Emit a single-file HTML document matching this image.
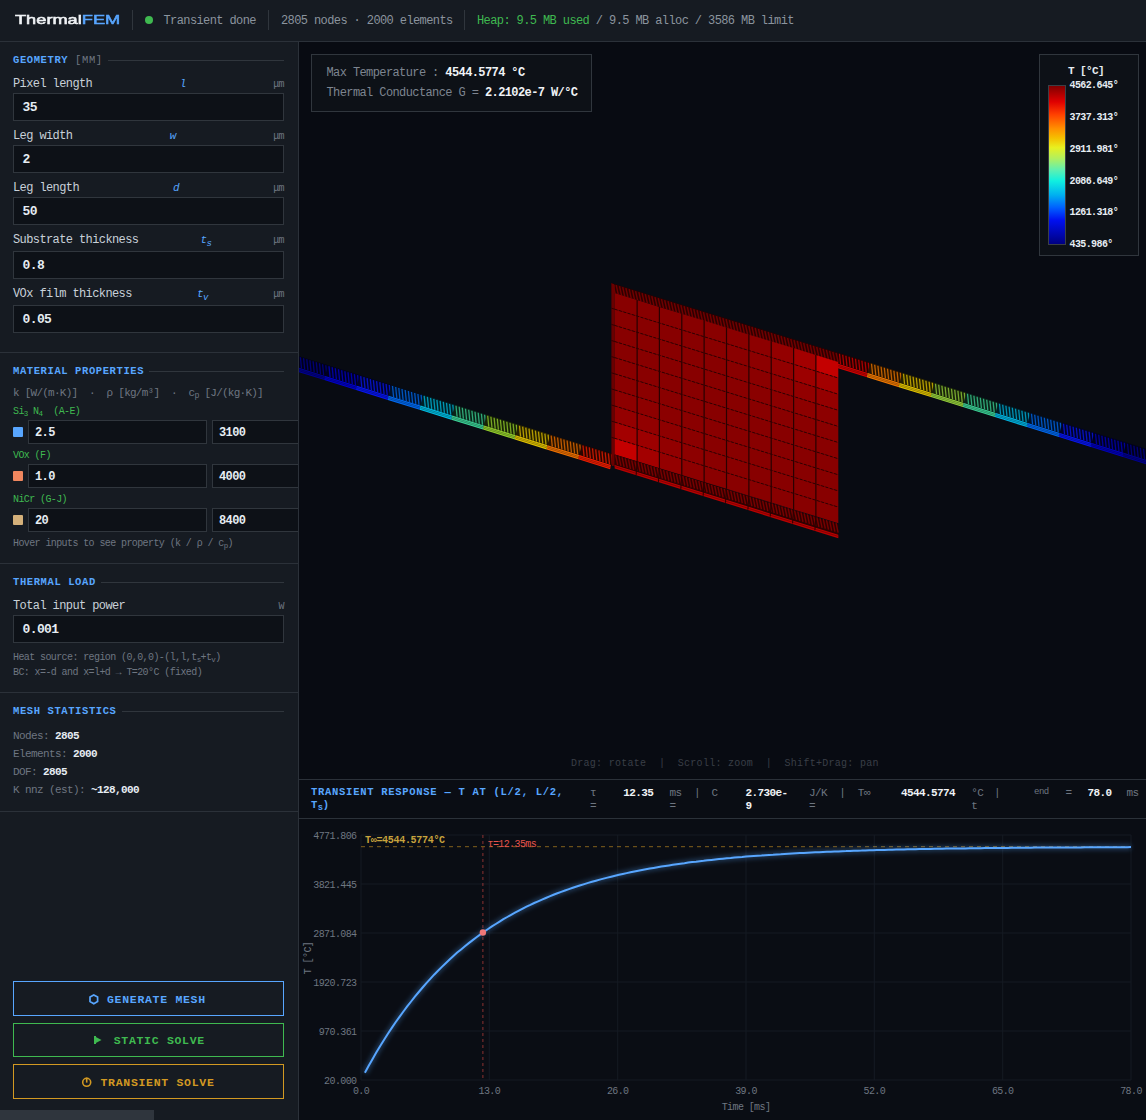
<!DOCTYPE html>
<html><head><meta charset="utf-8"><style>
*{box-sizing:border-box;margin:0;padding:0}
html,body{width:1146px;height:1120px;overflow:hidden;background:#0a0d14;font-family:"Liberation Mono",monospace;color:#c9d1d9}
.abs{position:absolute}
.t,.sh,.lbl,.iv,.it,.lg,.tt,.tk,.tv,.stat,.bt{position:absolute;white-space:pre}
#hdr{position:absolute;left:0;top:0;width:1146px;height:42px;background:#161b22;border-bottom:1px solid #2b3139}
.logo{position:absolute;left:15px;top:11px;font-family:"Liberation Sans",sans-serif;font-size:13.4px;line-height:18px;color:#f0f3f6;transform-origin:0 0;transform:scaleX(1.36);white-space:nowrap;-webkit-text-stroke:0.55px #f0f3f6}
.logo span{color:#58a6ff;-webkit-text-stroke:0.55px #58a6ff}
.sep{position:absolute;top:10px;width:1px;height:20px;background:#30363d}
#side{position:absolute;left:0;top:42px;width:299px;height:1078px;background:#161b22;border-right:1px solid #2b3139}
.sh{font-weight:bold;color:#58a6ff;display:flex;align-items:center;width:271px}
.sh i{font-style:normal;font-weight:normal;color:#6e7681}
.sh:after{content:"";flex:1;height:1px;background:#30363d;margin-left:5px;position:relative;top:0px}
.lbl{width:271px;display:flex;justify-content:space-between;align-items:baseline;color:#c9d1d9}
.lbl b{font-weight:normal;font-style:italic;color:#58a6ff;font-size:11px}
.lbl b sub{font-size:9px}
.lbl u{text-decoration:none;font-size:10px;color:#6e7681}
.inp{position:absolute;left:13px;width:271px;height:28px;background:#0d1117;border:1px solid #30363d}
.iv{font-weight:bold;color:#e6edf3}
.hsep{position:absolute;left:0;width:298px;height:1px;background:#2b3139}
sub{font-size:0.75em;vertical-align:-0.3em;line-height:0}
.sw{position:absolute;left:13px;width:10px;height:10px;border-radius:1px}
.mi{position:absolute;height:24px;background:#0d1117;border:1px solid #30363d}
.stat{color:#6e7681}
.stat b{color:#e6edf3}
.btn{position:absolute;left:13px;width:271px;height:35px;border:1px solid}
.bt{font-weight:bold}
#view{position:absolute;left:299px;top:42px;width:847px;height:737px;background:#080b12;overflow:hidden}
.it b{color:#f0f3f6}
.lg{font-weight:bold;color:#e6edf3}
.tt{font-weight:bold;color:#58a6ff}
.tt sub{letter-spacing:0}
.tk{color:#6e7681}
.tv{font-weight:bold;color:#f0f3f6}
.ax{font-family:"Liberation Mono",monospace;font-size:10px;letter-spacing:-0.6px;fill:#6e7681}
.lt{font-family:"Liberation Mono",monospace;font-size:10px;letter-spacing:-0.6px}
</style></head><body>
<div id="hdr"></div><div class="logo">Thermal<span>FEM</span></div><div class="sep" style="left:132px"></div><div class="abs" style="left:145px;top:16px;width:8px;height:8px;border-radius:50%;background:#3fb950"></div><div class="t" style="left:163.5px;top:14.00px;font-size:12px;line-height:15px;letter-spacing:-0.6px;color:#8b949e">Transient done</div>
<div class="sep" style="left:268px"></div><div class="t" style="left:281px;top:14.00px;font-size:12px;line-height:15px;letter-spacing:-0.6px;color:#8b949e">2805 nodes · 2000 elements</div>
<div class="sep" style="left:464px"></div><div class="t" style="left:477px;top:14.00px;font-size:12px;line-height:15px;letter-spacing:-0.6px;color:#8b949e"><span style="color:#3fb950">Heap: 9.5 MB used</span> / 9.5 MB alloc / 3586 MB limit</div>

<div id="side"></div>
<div style="position:absolute;left:0;top:0;width:298px;height:1120px;overflow:hidden">
<div class="sh" style="left:13px;top:54.00px;font-size:10.5px;line-height:13px;letter-spacing:0.6px;">GEOMETRY <i>[MM]</i></div>
<div class="lbl" style="left:13px;top:77.00px;font-size:12px;line-height:14px;letter-spacing:-0.6px;"><span>Pixel length</span><b>l</b><u>μm</u></div>
<div class="inp" style="top:93px"></div><div class="iv" style="left:22.5px;top:100.00px;font-size:13px;line-height:16px;letter-spacing:-0.6px;">35</div>
<div class="lbl" style="left:13px;top:129.00px;font-size:12px;line-height:14px;letter-spacing:-0.6px;"><span>Leg width</span><b>w</b><u>μm</u></div>
<div class="inp" style="top:145px"></div><div class="iv" style="left:22.5px;top:152.00px;font-size:13px;line-height:16px;letter-spacing:-0.6px;">2</div>
<div class="lbl" style="left:13px;top:181.00px;font-size:12px;line-height:14px;letter-spacing:-0.6px;"><span>Leg length</span><b>d</b><u>μm</u></div>
<div class="inp" style="top:197px"></div><div class="iv" style="left:22.5px;top:204.00px;font-size:13px;line-height:16px;letter-spacing:-0.6px;">50</div>
<div class="lbl" style="left:13px;top:233.00px;font-size:12px;line-height:14px;letter-spacing:-0.6px;"><span>Substrate thickness</span><b>t<sub>s</sub></b><u>μm</u></div>
<div class="inp" style="top:251px"></div><div class="iv" style="left:22.5px;top:258.00px;font-size:13px;line-height:16px;letter-spacing:-0.6px;">0.8</div>
<div class="lbl" style="left:13px;top:287.00px;font-size:12px;line-height:14px;letter-spacing:-0.6px;"><span>VOx film thickness</span><b>t<sub>v</sub></b><u>μm</u></div>
<div class="inp" style="top:305px"></div><div class="iv" style="left:22.5px;top:312.00px;font-size:13px;line-height:16px;letter-spacing:-0.6px;">0.05</div>
<div class="hsep" style="top:352px"></div><div class="sh" style="left:13px;top:365.00px;font-size:10.5px;line-height:13px;letter-spacing:0.6px;">MATERIAL PROPERTIES</div>
<div class="t" style="left:13px;top:386.00px;font-size:11px;line-height:14px;letter-spacing:-0.75px;color:#6e7681">k [W/(m·K)]  ·  ρ [kg/m³]  ·  c<sub>p</sub> [J/(kg·K)]</div>
<div class="t" style="left:13px;top:406.00px;font-size:10px;line-height:12px;letter-spacing:-0.6px;color:#3fb950">Si<sub>3</sub> N<sub>4</sub>  (A-E)</div>
<div class="sw" style="top:427px;background:#58a6ff"></div><div class="mi" style="top:420px;left:28px;width:179px"></div><div class="mi" style="top:420px;left:212px;width:179px"></div><div class="iv" style="left:35px;top:426.00px;font-size:12px;line-height:15px;letter-spacing:-0.6px;">2.5</div>
<div class="iv" style="left:219px;top:426.00px;font-size:12px;line-height:15px;letter-spacing:-0.6px;">3100</div>
<div class="t" style="left:13px;top:450.00px;font-size:10px;line-height:12px;letter-spacing:-0.6px;color:#3fb950">VOx (F)</div>
<div class="sw" style="top:471px;background:#f0875f"></div><div class="mi" style="top:464px;left:28px;width:179px"></div><div class="mi" style="top:464px;left:212px;width:179px"></div><div class="iv" style="left:35px;top:470.00px;font-size:12px;line-height:15px;letter-spacing:-0.6px;">1.0</div>
<div class="iv" style="left:219px;top:470.00px;font-size:12px;line-height:15px;letter-spacing:-0.6px;">4000</div>
<div class="t" style="left:13px;top:494.00px;font-size:10px;line-height:12px;letter-spacing:-0.6px;color:#3fb950">NiCr (G-J)</div>
<div class="sw" style="top:515px;background:#d4b07a"></div><div class="mi" style="top:508px;left:28px;width:179px"></div><div class="mi" style="top:508px;left:212px;width:179px"></div><div class="iv" style="left:35px;top:514.00px;font-size:12px;line-height:15px;letter-spacing:-0.6px;">20</div>
<div class="iv" style="left:219px;top:514.00px;font-size:12px;line-height:15px;letter-spacing:-0.6px;">8400</div>
<div class="t" style="left:13px;top:538.00px;font-size:10px;line-height:12px;letter-spacing:-0.6px;color:#6e7681">Hover inputs to see property (k / ρ / c<sub>p</sub>)</div>
<div class="hsep" style="top:563px"></div><div class="sh" style="left:13px;top:576.00px;font-size:10.5px;line-height:13px;letter-spacing:0.6px;">THERMAL LOAD</div>
<div class="lbl" style="left:13px;top:599.00px;font-size:12px;line-height:14px;letter-spacing:-0.6px;"><span>Total input power</span><u>W</u></div>
<div class="inp" style="top:615px"></div><div class="iv" style="left:22.5px;top:622.00px;font-size:13px;line-height:16px;letter-spacing:-0.6px;">0.001</div>
<div class="t" style="left:13px;top:652.00px;font-size:10px;line-height:12px;letter-spacing:-0.6px;color:#6e7681">Heat source: region (0,0,0)-(l,l,t<sub>s</sub>+t<sub>v</sub>)</div>
<div class="t" style="left:13px;top:667.00px;font-size:10px;line-height:12px;letter-spacing:-0.6px;color:#6e7681">BC: x=-d and x=l+d → T=20°C (fixed)</div>
<div class="hsep" style="top:692px"></div><div class="sh" style="left:13px;top:705.00px;font-size:10.5px;line-height:13px;letter-spacing:0.6px;">MESH STATISTICS</div>
<div class="stat" style="left:13px;top:729.00px;font-size:11px;line-height:14px;letter-spacing:-0.6px;">Nodes: <b>2805</b></div>
<div class="stat" style="left:13px;top:747.00px;font-size:11px;line-height:14px;letter-spacing:-0.6px;">Elements: <b>2000</b></div>
<div class="stat" style="left:13px;top:765.00px;font-size:11px;line-height:14px;letter-spacing:-0.6px;">DOF: <b>2805</b></div>
<div class="stat" style="left:13px;top:783.00px;font-size:11px;line-height:14px;letter-spacing:-0.6px;">K nnz (est): <b>~128,000</b></div>
<div class="hsep" style="top:811px"></div><div class="btn" style="top:981px;border-color:#58a6ff;height:35px"></div><div class="btn" style="top:1023px;border-color:#3fb950;height:34px"></div><div class="btn" style="top:1064px;border-color:#d29922;height:35px"></div><div class="bt" style="left:107px;top:993.00px;font-size:11.5px;line-height:14px;letter-spacing:0.7px;color:#58a6ff">GENERATE MESH</div>
<div class="bt" style="left:113.7px;top:1034.00px;font-size:11.5px;line-height:14px;letter-spacing:0.7px;color:#3fb950">STATIC SOLVE</div>
<div class="bt" style="left:100.5px;top:1076.00px;font-size:11.5px;line-height:14px;letter-spacing:0.7px;color:#d29922">TRANSIENT SOLVE</div>
<svg class="abs" style="left:0;top:0" width="298" height="1120"><polygon points="93.8,994.9 97.6,997.1 97.6,1001.5 93.8,1003.7 90,1001.5 90,997.1" fill="none" stroke="#58a6ff" stroke-width="1.7"/><polygon points="94,1036 101.5,1040 94,1044" fill="#3fb950"/><rect x="94" y="1036" width="2" height="8" fill="#3fb950"/><circle cx="86.7" cy="1082.3" r="4" fill="none" stroke="#d29922" stroke-width="1.6"/><rect x="85.9" y="1077.6" width="1.6" height="5" fill="#d29922"/></svg><div class="abs" style="left:0;top:1110px;width:154px;height:10px;background:#2f353d"></div>
</div>
<div id="view"><svg width="847" height="737" viewBox="299 42 847 737" style="position:absolute;left:0;top:0"><polygon points="296.0,355.3 327.8,365.2 325.1,375.9 293.4,366.0" fill="#000018"/>
<line x1="297.2" y1="356.3" x2="298.3" y2="367.3" stroke="#000072" stroke-width="1.3"/>
<line x1="300.4" y1="357.3" x2="301.5" y2="368.3" stroke="#000072" stroke-width="1.3"/>
<line x1="303.6" y1="358.3" x2="304.7" y2="369.3" stroke="#000072" stroke-width="1.3"/>
<line x1="306.8" y1="359.3" x2="307.9" y2="370.3" stroke="#000072" stroke-width="1.3"/>
<line x1="309.9" y1="360.3" x2="311.0" y2="371.3" stroke="#000072" stroke-width="1.3"/>
<line x1="313.1" y1="361.3" x2="314.2" y2="372.2" stroke="#000072" stroke-width="1.3"/>
<line x1="316.3" y1="362.3" x2="317.4" y2="373.2" stroke="#000072" stroke-width="1.3"/>
<line x1="319.5" y1="363.2" x2="320.6" y2="374.2" stroke="#000072" stroke-width="1.3"/>
<line x1="322.6" y1="364.2" x2="323.7" y2="375.2" stroke="#000072" stroke-width="1.3"/>
<line x1="325.8" y1="365.2" x2="326.9" y2="376.2" stroke="#000072" stroke-width="1.3"/>
<polygon points="293.4,366.0 325.1,375.9 324.3,380.1 292.6,370.2" fill="#000090"/>
<line x1="293.4" y1="367.5" x2="325.1" y2="377.4" stroke="#000044" stroke-width="0.6"/>
<line x1="293.4" y1="368.9" x2="325.1" y2="378.8" stroke="#000044" stroke-width="0.6"/>
<polygon points="327.8,365.2 359.5,375.1 356.9,385.8 325.1,375.9" fill="#000022"/>
<line x1="329.0" y1="366.2" x2="330.1" y2="377.2" stroke="#0000a2" stroke-width="1.3"/>
<line x1="332.2" y1="367.2" x2="333.3" y2="378.2" stroke="#0000a2" stroke-width="1.3"/>
<line x1="335.3" y1="368.2" x2="336.4" y2="379.2" stroke="#0000a2" stroke-width="1.3"/>
<line x1="338.5" y1="369.2" x2="339.6" y2="380.2" stroke="#0000a2" stroke-width="1.3"/>
<line x1="341.7" y1="370.2" x2="342.8" y2="381.2" stroke="#0000a2" stroke-width="1.3"/>
<line x1="344.9" y1="371.2" x2="346.0" y2="382.1" stroke="#0000a2" stroke-width="1.3"/>
<line x1="348.0" y1="372.2" x2="349.1" y2="383.1" stroke="#0000a2" stroke-width="1.3"/>
<line x1="351.2" y1="373.1" x2="352.3" y2="384.1" stroke="#0000a2" stroke-width="1.3"/>
<line x1="354.4" y1="374.1" x2="355.5" y2="385.1" stroke="#0000a2" stroke-width="1.3"/>
<line x1="357.6" y1="375.1" x2="358.7" y2="386.1" stroke="#0000a2" stroke-width="1.3"/>
<polygon points="325.1,375.9 356.9,385.8 356.1,390.0 324.3,380.1" fill="#0000cd"/>
<line x1="325.1" y1="377.4" x2="356.9" y2="387.3" stroke="#000061" stroke-width="0.6"/>
<line x1="325.1" y1="378.8" x2="356.9" y2="388.7" stroke="#000061" stroke-width="0.6"/>
<polygon points="359.5,375.1 391.2,385.0 388.6,395.7 356.9,385.8" fill="#010328"/>
<line x1="360.7" y1="376.1" x2="361.8" y2="387.1" stroke="#0612bf" stroke-width="1.3"/>
<line x1="363.9" y1="377.1" x2="365.0" y2="388.1" stroke="#0612bf" stroke-width="1.3"/>
<line x1="367.1" y1="378.1" x2="368.2" y2="389.1" stroke="#0612bf" stroke-width="1.3"/>
<line x1="370.3" y1="379.1" x2="371.4" y2="390.1" stroke="#0612bf" stroke-width="1.3"/>
<line x1="373.4" y1="380.1" x2="374.5" y2="391.1" stroke="#0612bf" stroke-width="1.3"/>
<line x1="376.6" y1="381.1" x2="377.7" y2="392.1" stroke="#0612bf" stroke-width="1.3"/>
<line x1="379.8" y1="382.1" x2="380.9" y2="393.0" stroke="#0612bf" stroke-width="1.3"/>
<line x1="383.0" y1="383.1" x2="384.1" y2="394.0" stroke="#0612bf" stroke-width="1.3"/>
<line x1="386.1" y1="384.0" x2="387.2" y2="395.0" stroke="#0612bf" stroke-width="1.3"/>
<line x1="389.3" y1="385.0" x2="390.4" y2="396.0" stroke="#0612bf" stroke-width="1.3"/>
<polygon points="356.9,385.8 388.6,395.7 387.8,399.9 356.1,390.0" fill="#0716f2"/>
<line x1="356.9" y1="387.3" x2="388.6" y2="397.2" stroke="#030a72" stroke-width="0.6"/>
<line x1="356.9" y1="388.7" x2="388.6" y2="398.6" stroke="#030a72" stroke-width="0.6"/>
<polygon points="391.2,385.0 423.0,394.9 420.4,405.6 388.6,395.7" fill="#001128"/>
<line x1="392.5" y1="386.0" x2="393.6" y2="397.0" stroke="#0054bf" stroke-width="1.3"/>
<line x1="395.7" y1="387.0" x2="396.8" y2="398.0" stroke="#0054bf" stroke-width="1.3"/>
<line x1="398.8" y1="388.0" x2="399.9" y2="399.0" stroke="#0054bf" stroke-width="1.3"/>
<line x1="402.0" y1="389.0" x2="403.1" y2="400.0" stroke="#0054bf" stroke-width="1.3"/>
<line x1="405.2" y1="390.0" x2="406.3" y2="401.0" stroke="#0054bf" stroke-width="1.3"/>
<line x1="408.4" y1="391.0" x2="409.5" y2="402.0" stroke="#0054bf" stroke-width="1.3"/>
<line x1="411.5" y1="392.0" x2="412.6" y2="403.0" stroke="#0054bf" stroke-width="1.3"/>
<line x1="414.7" y1="393.0" x2="415.8" y2="403.9" stroke="#0054bf" stroke-width="1.3"/>
<line x1="417.9" y1="394.0" x2="419.0" y2="404.9" stroke="#0054bf" stroke-width="1.3"/>
<line x1="421.1" y1="394.9" x2="422.2" y2="405.9" stroke="#0054bf" stroke-width="1.3"/>
<polygon points="388.6,395.7 420.4,405.6 419.6,409.8 387.8,399.9" fill="#006af2"/>
<line x1="388.6" y1="397.2" x2="420.4" y2="407.1" stroke="#003272" stroke-width="0.6"/>
<line x1="388.6" y1="398.6" x2="420.4" y2="408.5" stroke="#003272" stroke-width="0.6"/>
<polygon points="423.0,394.9 454.8,404.8 452.1,415.5 420.4,405.6" fill="#002026"/>
<line x1="424.2" y1="395.9" x2="425.3" y2="406.9" stroke="#0096b4" stroke-width="1.3"/>
<line x1="427.4" y1="396.9" x2="428.5" y2="407.9" stroke="#0096b4" stroke-width="1.3"/>
<line x1="430.6" y1="397.9" x2="431.7" y2="408.9" stroke="#0096b4" stroke-width="1.3"/>
<line x1="433.8" y1="398.9" x2="434.9" y2="409.9" stroke="#0096b4" stroke-width="1.3"/>
<line x1="436.9" y1="399.9" x2="438.0" y2="410.9" stroke="#0096b4" stroke-width="1.3"/>
<line x1="440.1" y1="400.9" x2="441.2" y2="411.9" stroke="#0096b4" stroke-width="1.3"/>
<line x1="443.3" y1="401.9" x2="444.4" y2="412.9" stroke="#0096b4" stroke-width="1.3"/>
<line x1="446.5" y1="402.9" x2="447.6" y2="413.8" stroke="#0096b4" stroke-width="1.3"/>
<line x1="449.6" y1="403.9" x2="450.7" y2="414.8" stroke="#0096b4" stroke-width="1.3"/>
<line x1="452.8" y1="404.8" x2="453.9" y2="415.8" stroke="#0096b4" stroke-width="1.3"/>
<polygon points="420.4,405.6 452.1,415.5 451.3,419.7 419.6,409.8" fill="#00bee4"/>
<line x1="420.4" y1="407.1" x2="452.1" y2="417.0" stroke="#005a6c" stroke-width="0.6"/>
<line x1="420.4" y1="408.5" x2="452.1" y2="418.4" stroke="#005a6c" stroke-width="0.6"/>
<polygon points="454.8,404.8 486.5,414.7 483.9,425.4 452.1,415.5" fill="#0a2319"/>
<line x1="456.0" y1="405.8" x2="457.1" y2="416.8" stroke="#30a878" stroke-width="1.3"/>
<line x1="459.2" y1="406.8" x2="460.3" y2="417.8" stroke="#30a878" stroke-width="1.3"/>
<line x1="462.3" y1="407.8" x2="463.4" y2="418.8" stroke="#30a878" stroke-width="1.3"/>
<line x1="465.5" y1="408.8" x2="466.6" y2="419.8" stroke="#30a878" stroke-width="1.3"/>
<line x1="468.7" y1="409.8" x2="469.8" y2="420.8" stroke="#30a878" stroke-width="1.3"/>
<line x1="471.9" y1="410.8" x2="473.0" y2="421.8" stroke="#30a878" stroke-width="1.3"/>
<line x1="475.0" y1="411.8" x2="476.1" y2="422.8" stroke="#30a878" stroke-width="1.3"/>
<line x1="478.2" y1="412.8" x2="479.3" y2="423.8" stroke="#30a878" stroke-width="1.3"/>
<line x1="481.4" y1="413.8" x2="482.5" y2="424.7" stroke="#30a878" stroke-width="1.3"/>
<line x1="484.6" y1="414.8" x2="485.7" y2="425.7" stroke="#30a878" stroke-width="1.3"/>
<polygon points="452.1,415.5 483.9,425.4 483.1,429.6 451.3,419.7" fill="#3cd498"/>
<line x1="452.1" y1="417.0" x2="483.9" y2="426.9" stroke="#1c6448" stroke-width="0.6"/>
<line x1="452.1" y1="418.4" x2="483.9" y2="428.3" stroke="#1c6448" stroke-width="0.6"/>
<polygon points="486.5,414.7 518.2,424.6 515.6,435.3 483.9,425.4" fill="#192307"/>
<line x1="487.7" y1="415.7" x2="488.8" y2="426.7" stroke="#78a824" stroke-width="1.3"/>
<line x1="490.9" y1="416.7" x2="492.0" y2="427.7" stroke="#78a824" stroke-width="1.3"/>
<line x1="494.1" y1="417.7" x2="495.2" y2="428.7" stroke="#78a824" stroke-width="1.3"/>
<line x1="497.3" y1="418.7" x2="498.4" y2="429.7" stroke="#78a824" stroke-width="1.3"/>
<line x1="500.4" y1="419.7" x2="501.5" y2="430.7" stroke="#78a824" stroke-width="1.3"/>
<line x1="503.6" y1="420.7" x2="504.7" y2="431.7" stroke="#78a824" stroke-width="1.3"/>
<line x1="506.8" y1="421.7" x2="507.9" y2="432.7" stroke="#78a824" stroke-width="1.3"/>
<line x1="510.0" y1="422.7" x2="511.1" y2="433.7" stroke="#78a824" stroke-width="1.3"/>
<line x1="513.1" y1="423.7" x2="514.2" y2="434.7" stroke="#78a824" stroke-width="1.3"/>
<line x1="516.3" y1="424.7" x2="517.4" y2="435.6" stroke="#78a824" stroke-width="1.3"/>
<polygon points="483.9,425.4 515.6,435.3 514.9,439.5 483.1,429.6" fill="#98d42d"/>
<line x1="483.9" y1="426.9" x2="515.6" y2="436.8" stroke="#486415" stroke-width="0.6"/>
<line x1="483.9" y1="428.3" x2="515.6" y2="438.2" stroke="#486415" stroke-width="0.6"/>
<polygon points="518.2,424.6 550.0,434.5 547.4,445.2 515.6,435.3" fill="#262100"/>
<line x1="519.5" y1="425.7" x2="520.6" y2="436.6" stroke="#b49c00" stroke-width="1.3"/>
<line x1="522.7" y1="426.6" x2="523.8" y2="437.6" stroke="#b49c00" stroke-width="1.3"/>
<line x1="525.8" y1="427.6" x2="526.9" y2="438.6" stroke="#b49c00" stroke-width="1.3"/>
<line x1="529.0" y1="428.6" x2="530.1" y2="439.6" stroke="#b49c00" stroke-width="1.3"/>
<line x1="532.2" y1="429.6" x2="533.3" y2="440.6" stroke="#b49c00" stroke-width="1.3"/>
<line x1="535.4" y1="430.6" x2="536.5" y2="441.6" stroke="#b49c00" stroke-width="1.3"/>
<line x1="538.5" y1="431.6" x2="539.6" y2="442.6" stroke="#b49c00" stroke-width="1.3"/>
<line x1="541.7" y1="432.6" x2="542.8" y2="443.6" stroke="#b49c00" stroke-width="1.3"/>
<line x1="544.9" y1="433.6" x2="546.0" y2="444.6" stroke="#b49c00" stroke-width="1.3"/>
<line x1="548.1" y1="434.6" x2="549.2" y2="445.5" stroke="#b49c00" stroke-width="1.3"/>
<polygon points="515.6,435.3 547.4,445.2 546.6,449.4 514.9,439.5" fill="#e4c500"/>
<line x1="515.6" y1="436.8" x2="547.4" y2="446.7" stroke="#6c5d00" stroke-width="0.6"/>
<line x1="515.6" y1="438.2" x2="547.4" y2="448.1" stroke="#6c5d00" stroke-width="0.6"/>
<polygon points="550.0,434.5 581.8,444.4 579.1,455.1 547.4,445.2" fill="#281300"/>
<line x1="551.2" y1="435.6" x2="552.3" y2="446.5" stroke="#bf5a00" stroke-width="1.3"/>
<line x1="554.4" y1="436.5" x2="555.5" y2="447.5" stroke="#bf5a00" stroke-width="1.3"/>
<line x1="557.6" y1="437.5" x2="558.7" y2="448.5" stroke="#bf5a00" stroke-width="1.3"/>
<line x1="560.8" y1="438.5" x2="561.9" y2="449.5" stroke="#bf5a00" stroke-width="1.3"/>
<line x1="563.9" y1="439.5" x2="565.0" y2="450.5" stroke="#bf5a00" stroke-width="1.3"/>
<line x1="567.1" y1="440.5" x2="568.2" y2="451.5" stroke="#bf5a00" stroke-width="1.3"/>
<line x1="570.3" y1="441.5" x2="571.4" y2="452.5" stroke="#bf5a00" stroke-width="1.3"/>
<line x1="573.5" y1="442.5" x2="574.6" y2="453.5" stroke="#bf5a00" stroke-width="1.3"/>
<line x1="576.6" y1="443.5" x2="577.7" y2="454.5" stroke="#bf5a00" stroke-width="1.3"/>
<line x1="579.8" y1="444.5" x2="580.9" y2="455.5" stroke="#bf5a00" stroke-width="1.3"/>
<polygon points="547.4,445.2 579.1,455.1 578.4,459.3 546.6,449.4" fill="#f27200"/>
<line x1="547.4" y1="446.7" x2="579.1" y2="456.6" stroke="#723600" stroke-width="0.6"/>
<line x1="547.4" y1="448.1" x2="579.1" y2="458.0" stroke="#723600" stroke-width="0.6"/>
<polygon points="581.8,444.4 613.5,454.3 610.9,465.0 579.1,455.1" fill="#280500"/>
<line x1="583.0" y1="445.5" x2="584.1" y2="456.4" stroke="#bf1800" stroke-width="1.3"/>
<line x1="586.2" y1="446.5" x2="587.3" y2="457.4" stroke="#bf1800" stroke-width="1.3"/>
<line x1="589.3" y1="447.4" x2="590.4" y2="458.4" stroke="#bf1800" stroke-width="1.3"/>
<line x1="592.5" y1="448.4" x2="593.6" y2="459.4" stroke="#bf1800" stroke-width="1.3"/>
<line x1="595.7" y1="449.4" x2="596.8" y2="460.4" stroke="#bf1800" stroke-width="1.3"/>
<line x1="598.9" y1="450.4" x2="600.0" y2="461.4" stroke="#bf1800" stroke-width="1.3"/>
<line x1="602.0" y1="451.4" x2="603.1" y2="462.4" stroke="#bf1800" stroke-width="1.3"/>
<line x1="605.2" y1="452.4" x2="606.3" y2="463.4" stroke="#bf1800" stroke-width="1.3"/>
<line x1="608.4" y1="453.4" x2="609.5" y2="464.4" stroke="#bf1800" stroke-width="1.3"/>
<line x1="611.6" y1="454.4" x2="612.7" y2="465.4" stroke="#bf1800" stroke-width="1.3"/>
<polygon points="579.1,455.1 610.9,465.0 610.1,469.2 578.4,459.3" fill="#f21e00"/>
<line x1="579.1" y1="456.6" x2="610.9" y2="466.5" stroke="#720e00" stroke-width="0.6"/>
<line x1="579.1" y1="458.0" x2="610.9" y2="468.0" stroke="#720e00" stroke-width="0.6"/>
<polygon points="838.3,352.8 870.3,362.8 867.7,373.0 835.7,363.0" fill="#230000"/>
<line x1="839.5" y1="353.8" x2="840.6" y2="364.3" stroke="#a80000" stroke-width="1.3"/>
<line x1="842.7" y1="354.8" x2="843.8" y2="365.3" stroke="#a80000" stroke-width="1.3"/>
<line x1="845.9" y1="355.8" x2="847.0" y2="366.3" stroke="#a80000" stroke-width="1.3"/>
<line x1="849.1" y1="356.8" x2="850.2" y2="367.3" stroke="#a80000" stroke-width="1.3"/>
<line x1="852.3" y1="357.8" x2="853.4" y2="368.3" stroke="#a80000" stroke-width="1.3"/>
<line x1="855.5" y1="358.8" x2="856.6" y2="369.3" stroke="#a80000" stroke-width="1.3"/>
<line x1="858.7" y1="359.8" x2="859.8" y2="370.3" stroke="#a80000" stroke-width="1.3"/>
<line x1="861.9" y1="360.8" x2="863.0" y2="371.3" stroke="#a80000" stroke-width="1.3"/>
<line x1="865.1" y1="361.8" x2="866.2" y2="372.3" stroke="#a80000" stroke-width="1.3"/>
<line x1="868.3" y1="362.8" x2="869.4" y2="373.3" stroke="#a80000" stroke-width="1.3"/>
<polygon points="835.7,363.0 867.7,373.0 866.9,377.2 834.9,367.2" fill="#d40000"/>
<line x1="835.7" y1="364.5" x2="867.7" y2="374.5" stroke="#640000" stroke-width="0.6"/>
<line x1="835.7" y1="365.9" x2="867.7" y2="375.9" stroke="#640000" stroke-width="0.6"/>
<polygon points="870.3,362.8 902.3,372.8 899.7,383.0 867.7,373.0" fill="#281400"/>
<line x1="871.5" y1="363.8" x2="872.6" y2="374.3" stroke="#bf6000" stroke-width="1.3"/>
<line x1="874.7" y1="364.8" x2="875.8" y2="375.3" stroke="#bf6000" stroke-width="1.3"/>
<line x1="877.9" y1="365.8" x2="879.0" y2="376.3" stroke="#bf6000" stroke-width="1.3"/>
<line x1="881.1" y1="366.8" x2="882.2" y2="377.3" stroke="#bf6000" stroke-width="1.3"/>
<line x1="884.3" y1="367.8" x2="885.4" y2="378.3" stroke="#bf6000" stroke-width="1.3"/>
<line x1="887.5" y1="368.8" x2="888.6" y2="379.3" stroke="#bf6000" stroke-width="1.3"/>
<line x1="890.7" y1="369.8" x2="891.8" y2="380.3" stroke="#bf6000" stroke-width="1.3"/>
<line x1="893.9" y1="370.8" x2="895.0" y2="381.3" stroke="#bf6000" stroke-width="1.3"/>
<line x1="897.1" y1="371.8" x2="898.2" y2="382.3" stroke="#bf6000" stroke-width="1.3"/>
<line x1="900.3" y1="372.8" x2="901.4" y2="383.3" stroke="#bf6000" stroke-width="1.3"/>
<polygon points="867.7,373.0 899.7,383.0 898.9,387.2 866.9,377.2" fill="#f27900"/>
<line x1="867.7" y1="374.5" x2="899.7" y2="384.5" stroke="#723900" stroke-width="0.6"/>
<line x1="867.7" y1="375.9" x2="899.7" y2="385.9" stroke="#723900" stroke-width="0.6"/>
<polygon points="902.3,372.8 934.3,382.7 931.7,392.9 899.7,383.0" fill="#262100"/>
<line x1="903.5" y1="373.8" x2="904.6" y2="384.3" stroke="#b49c00" stroke-width="1.3"/>
<line x1="906.7" y1="374.8" x2="907.8" y2="385.3" stroke="#b49c00" stroke-width="1.3"/>
<line x1="909.9" y1="375.8" x2="911.0" y2="386.3" stroke="#b49c00" stroke-width="1.3"/>
<line x1="913.1" y1="376.8" x2="914.2" y2="387.3" stroke="#b49c00" stroke-width="1.3"/>
<line x1="916.3" y1="377.8" x2="917.4" y2="388.3" stroke="#b49c00" stroke-width="1.3"/>
<line x1="919.5" y1="378.8" x2="920.6" y2="389.3" stroke="#b49c00" stroke-width="1.3"/>
<line x1="922.7" y1="379.8" x2="923.8" y2="390.3" stroke="#b49c00" stroke-width="1.3"/>
<line x1="925.9" y1="380.8" x2="927.0" y2="391.3" stroke="#b49c00" stroke-width="1.3"/>
<line x1="929.1" y1="381.8" x2="930.2" y2="392.3" stroke="#b49c00" stroke-width="1.3"/>
<line x1="932.3" y1="382.8" x2="933.4" y2="393.3" stroke="#b49c00" stroke-width="1.3"/>
<polygon points="899.7,383.0 931.7,392.9 930.9,397.1 898.9,387.2" fill="#e4c500"/>
<line x1="899.7" y1="384.5" x2="931.7" y2="394.4" stroke="#6c5d00" stroke-width="0.6"/>
<line x1="899.7" y1="385.9" x2="931.7" y2="395.9" stroke="#6c5d00" stroke-width="0.6"/>
<polygon points="934.3,382.7 966.3,392.7 963.7,402.9 931.7,392.9" fill="#19230a"/>
<line x1="935.5" y1="383.8" x2="936.6" y2="394.3" stroke="#78a830" stroke-width="1.3"/>
<line x1="938.7" y1="384.8" x2="939.8" y2="395.3" stroke="#78a830" stroke-width="1.3"/>
<line x1="941.9" y1="385.8" x2="943.0" y2="396.3" stroke="#78a830" stroke-width="1.3"/>
<line x1="945.1" y1="386.8" x2="946.2" y2="397.3" stroke="#78a830" stroke-width="1.3"/>
<line x1="948.3" y1="387.8" x2="949.4" y2="398.3" stroke="#78a830" stroke-width="1.3"/>
<line x1="951.5" y1="388.8" x2="952.6" y2="399.3" stroke="#78a830" stroke-width="1.3"/>
<line x1="954.7" y1="389.8" x2="955.8" y2="400.3" stroke="#78a830" stroke-width="1.3"/>
<line x1="957.9" y1="390.8" x2="959.0" y2="401.3" stroke="#78a830" stroke-width="1.3"/>
<line x1="961.1" y1="391.8" x2="962.2" y2="402.3" stroke="#78a830" stroke-width="1.3"/>
<line x1="964.3" y1="392.8" x2="965.4" y2="403.3" stroke="#78a830" stroke-width="1.3"/>
<polygon points="931.7,392.9 963.7,402.9 962.9,407.1 930.9,397.1" fill="#98d43c"/>
<line x1="931.7" y1="394.4" x2="963.7" y2="404.4" stroke="#48641c" stroke-width="0.6"/>
<line x1="931.7" y1="395.9" x2="963.7" y2="405.9" stroke="#48641c" stroke-width="0.6"/>
<polygon points="966.3,392.7 998.3,402.7 995.7,412.9 963.7,402.9" fill="#0a2319"/>
<line x1="967.5" y1="393.8" x2="968.6" y2="404.3" stroke="#30a878" stroke-width="1.3"/>
<line x1="970.7" y1="394.8" x2="971.8" y2="405.3" stroke="#30a878" stroke-width="1.3"/>
<line x1="973.9" y1="395.8" x2="975.0" y2="406.3" stroke="#30a878" stroke-width="1.3"/>
<line x1="977.1" y1="396.8" x2="978.2" y2="407.3" stroke="#30a878" stroke-width="1.3"/>
<line x1="980.3" y1="397.8" x2="981.4" y2="408.3" stroke="#30a878" stroke-width="1.3"/>
<line x1="983.5" y1="398.8" x2="984.6" y2="409.3" stroke="#30a878" stroke-width="1.3"/>
<line x1="986.7" y1="399.8" x2="987.8" y2="410.3" stroke="#30a878" stroke-width="1.3"/>
<line x1="989.9" y1="400.8" x2="991.0" y2="411.2" stroke="#30a878" stroke-width="1.3"/>
<line x1="993.1" y1="401.8" x2="994.2" y2="412.2" stroke="#30a878" stroke-width="1.3"/>
<line x1="996.3" y1="402.8" x2="997.4" y2="413.2" stroke="#30a878" stroke-width="1.3"/>
<polygon points="963.7,402.9 995.7,412.9 994.9,417.1 962.9,407.1" fill="#3cd498"/>
<line x1="963.7" y1="404.4" x2="995.7" y2="414.4" stroke="#1c6448" stroke-width="0.6"/>
<line x1="963.7" y1="405.9" x2="995.7" y2="415.8" stroke="#1c6448" stroke-width="0.6"/>
<polygon points="998.3,402.7 1030.3,412.7 1027.7,422.9 995.7,412.9" fill="#001e26"/>
<line x1="999.5" y1="403.8" x2="1000.6" y2="414.2" stroke="#0090b4" stroke-width="1.3"/>
<line x1="1002.7" y1="404.8" x2="1003.8" y2="415.2" stroke="#0090b4" stroke-width="1.3"/>
<line x1="1005.9" y1="405.8" x2="1007.0" y2="416.2" stroke="#0090b4" stroke-width="1.3"/>
<line x1="1009.1" y1="406.8" x2="1010.2" y2="417.2" stroke="#0090b4" stroke-width="1.3"/>
<line x1="1012.3" y1="407.8" x2="1013.4" y2="418.2" stroke="#0090b4" stroke-width="1.3"/>
<line x1="1015.5" y1="408.8" x2="1016.6" y2="419.2" stroke="#0090b4" stroke-width="1.3"/>
<line x1="1018.7" y1="409.8" x2="1019.8" y2="420.2" stroke="#0090b4" stroke-width="1.3"/>
<line x1="1021.9" y1="410.8" x2="1023.0" y2="421.2" stroke="#0090b4" stroke-width="1.3"/>
<line x1="1025.1" y1="411.8" x2="1026.2" y2="422.2" stroke="#0090b4" stroke-width="1.3"/>
<line x1="1028.3" y1="412.7" x2="1029.4" y2="423.2" stroke="#0090b4" stroke-width="1.3"/>
<polygon points="995.7,412.9 1027.7,422.9 1026.9,427.1 994.9,417.1" fill="#00b6e4"/>
<line x1="995.7" y1="414.4" x2="1027.7" y2="424.4" stroke="#00566c" stroke-width="0.6"/>
<line x1="995.7" y1="415.8" x2="1027.7" y2="425.8" stroke="#00566c" stroke-width="0.6"/>
<polygon points="1030.3,412.7 1062.3,422.7 1059.7,432.9 1027.7,422.9" fill="#001128"/>
<line x1="1031.5" y1="413.7" x2="1032.6" y2="424.2" stroke="#0054bf" stroke-width="1.3"/>
<line x1="1034.7" y1="414.7" x2="1035.8" y2="425.2" stroke="#0054bf" stroke-width="1.3"/>
<line x1="1037.9" y1="415.7" x2="1039.0" y2="426.2" stroke="#0054bf" stroke-width="1.3"/>
<line x1="1041.1" y1="416.7" x2="1042.2" y2="427.2" stroke="#0054bf" stroke-width="1.3"/>
<line x1="1044.3" y1="417.7" x2="1045.4" y2="428.2" stroke="#0054bf" stroke-width="1.3"/>
<line x1="1047.5" y1="418.7" x2="1048.6" y2="429.2" stroke="#0054bf" stroke-width="1.3"/>
<line x1="1050.7" y1="419.7" x2="1051.8" y2="430.2" stroke="#0054bf" stroke-width="1.3"/>
<line x1="1053.9" y1="420.7" x2="1055.0" y2="431.2" stroke="#0054bf" stroke-width="1.3"/>
<line x1="1057.1" y1="421.7" x2="1058.2" y2="432.2" stroke="#0054bf" stroke-width="1.3"/>
<line x1="1060.3" y1="422.7" x2="1061.4" y2="433.2" stroke="#0054bf" stroke-width="1.3"/>
<polygon points="1027.7,422.9 1059.7,432.9 1058.9,437.1 1026.9,427.1" fill="#006af2"/>
<line x1="1027.7" y1="424.4" x2="1059.7" y2="434.4" stroke="#003272" stroke-width="0.6"/>
<line x1="1027.7" y1="425.8" x2="1059.7" y2="435.8" stroke="#003272" stroke-width="0.6"/>
<polygon points="1062.3,422.7 1094.3,432.7 1091.7,442.9 1059.7,432.9" fill="#010328"/>
<line x1="1063.5" y1="423.7" x2="1064.6" y2="434.2" stroke="#0612bf" stroke-width="1.3"/>
<line x1="1066.7" y1="424.7" x2="1067.8" y2="435.2" stroke="#0612bf" stroke-width="1.3"/>
<line x1="1069.9" y1="425.7" x2="1071.0" y2="436.2" stroke="#0612bf" stroke-width="1.3"/>
<line x1="1073.1" y1="426.7" x2="1074.2" y2="437.2" stroke="#0612bf" stroke-width="1.3"/>
<line x1="1076.3" y1="427.7" x2="1077.4" y2="438.2" stroke="#0612bf" stroke-width="1.3"/>
<line x1="1079.5" y1="428.7" x2="1080.6" y2="439.2" stroke="#0612bf" stroke-width="1.3"/>
<line x1="1082.7" y1="429.7" x2="1083.8" y2="440.2" stroke="#0612bf" stroke-width="1.3"/>
<line x1="1085.9" y1="430.7" x2="1087.0" y2="441.2" stroke="#0612bf" stroke-width="1.3"/>
<line x1="1089.1" y1="431.7" x2="1090.2" y2="442.2" stroke="#0612bf" stroke-width="1.3"/>
<line x1="1092.3" y1="432.7" x2="1093.4" y2="443.2" stroke="#0612bf" stroke-width="1.3"/>
<polygon points="1059.7,432.9 1091.7,442.9 1090.9,447.1 1058.9,437.1" fill="#0716f2"/>
<line x1="1059.7" y1="434.4" x2="1091.7" y2="444.4" stroke="#030a72" stroke-width="0.6"/>
<line x1="1059.7" y1="435.8" x2="1091.7" y2="445.8" stroke="#030a72" stroke-width="0.6"/>
<polygon points="1094.3,432.7 1126.3,442.6 1123.7,452.8 1091.7,442.9" fill="#000020"/>
<line x1="1095.5" y1="433.7" x2="1096.6" y2="444.2" stroke="#000096" stroke-width="1.3"/>
<line x1="1098.7" y1="434.7" x2="1099.8" y2="445.2" stroke="#000096" stroke-width="1.3"/>
<line x1="1101.9" y1="435.7" x2="1103.0" y2="446.2" stroke="#000096" stroke-width="1.3"/>
<line x1="1105.1" y1="436.7" x2="1106.2" y2="447.2" stroke="#000096" stroke-width="1.3"/>
<line x1="1108.3" y1="437.7" x2="1109.4" y2="448.2" stroke="#000096" stroke-width="1.3"/>
<line x1="1111.5" y1="438.7" x2="1112.6" y2="449.2" stroke="#000096" stroke-width="1.3"/>
<line x1="1114.7" y1="439.7" x2="1115.8" y2="450.2" stroke="#000096" stroke-width="1.3"/>
<line x1="1117.9" y1="440.7" x2="1119.0" y2="451.2" stroke="#000096" stroke-width="1.3"/>
<line x1="1121.1" y1="441.7" x2="1122.2" y2="452.2" stroke="#000096" stroke-width="1.3"/>
<line x1="1124.3" y1="442.7" x2="1125.4" y2="453.2" stroke="#000096" stroke-width="1.3"/>
<polygon points="1091.7,442.9 1123.7,452.8 1122.9,457.0 1090.9,447.1" fill="#0000be"/>
<line x1="1091.7" y1="444.4" x2="1123.7" y2="454.4" stroke="#00005a" stroke-width="0.6"/>
<line x1="1091.7" y1="445.8" x2="1123.7" y2="455.8" stroke="#00005a" stroke-width="0.6"/>
<polygon points="1126.3,442.6 1158.3,452.6 1155.7,462.8 1123.7,452.8" fill="#000018"/>
<line x1="1127.5" y1="443.7" x2="1128.6" y2="454.2" stroke="#000072" stroke-width="1.3"/>
<line x1="1130.7" y1="444.7" x2="1131.8" y2="455.2" stroke="#000072" stroke-width="1.3"/>
<line x1="1133.9" y1="445.7" x2="1135.0" y2="456.2" stroke="#000072" stroke-width="1.3"/>
<line x1="1137.1" y1="446.7" x2="1138.2" y2="457.2" stroke="#000072" stroke-width="1.3"/>
<line x1="1140.3" y1="447.7" x2="1141.4" y2="458.2" stroke="#000072" stroke-width="1.3"/>
<line x1="1143.5" y1="448.7" x2="1144.6" y2="459.2" stroke="#000072" stroke-width="1.3"/>
<line x1="1146.7" y1="449.7" x2="1147.8" y2="460.2" stroke="#000072" stroke-width="1.3"/>
<line x1="1149.9" y1="450.7" x2="1151.0" y2="461.2" stroke="#000072" stroke-width="1.3"/>
<line x1="1153.1" y1="451.7" x2="1154.2" y2="462.2" stroke="#000072" stroke-width="1.3"/>
<line x1="1156.3" y1="452.7" x2="1157.4" y2="463.2" stroke="#000072" stroke-width="1.3"/>
<polygon points="1123.7,452.8 1155.7,462.8 1154.9,467.0 1122.9,457.0" fill="#000090"/>
<line x1="1123.7" y1="454.4" x2="1155.7" y2="464.3" stroke="#000044" stroke-width="0.6"/>
<line x1="1123.7" y1="455.8" x2="1155.7" y2="465.8" stroke="#000044" stroke-width="0.6"/>
<polygon points="611.4,283.1 838.3,352.9 838.3,361.9 614.7,293.1 611.4,293.1" fill="#2c0000"/>
<line x1="613.0" y1="284.2" x2="615.0" y2="293.2" stroke="#720000" stroke-width="1.4"/>
<line x1="616.2" y1="285.2" x2="618.2" y2="294.2" stroke="#720000" stroke-width="1.4"/>
<line x1="619.5" y1="286.2" x2="621.5" y2="295.2" stroke="#720000" stroke-width="1.4"/>
<line x1="622.7" y1="287.2" x2="624.7" y2="296.2" stroke="#720000" stroke-width="1.4"/>
<line x1="625.9" y1="288.2" x2="627.9" y2="297.2" stroke="#720000" stroke-width="1.4"/>
<line x1="629.2" y1="289.2" x2="631.2" y2="298.2" stroke="#720000" stroke-width="1.4"/>
<line x1="632.4" y1="290.2" x2="634.4" y2="299.2" stroke="#720000" stroke-width="1.4"/>
<line x1="635.6" y1="291.2" x2="637.6" y2="300.2" stroke="#720000" stroke-width="1.4"/>
<line x1="638.9" y1="292.2" x2="640.9" y2="301.2" stroke="#720000" stroke-width="1.4"/>
<line x1="642.1" y1="293.2" x2="644.1" y2="302.2" stroke="#720000" stroke-width="1.4"/>
<line x1="645.3" y1="294.2" x2="647.3" y2="303.2" stroke="#720000" stroke-width="1.4"/>
<line x1="648.6" y1="295.2" x2="650.6" y2="304.2" stroke="#720000" stroke-width="1.4"/>
<line x1="651.8" y1="296.2" x2="653.8" y2="305.2" stroke="#720000" stroke-width="1.4"/>
<line x1="655.0" y1="297.2" x2="657.0" y2="306.2" stroke="#720000" stroke-width="1.4"/>
<line x1="658.3" y1="298.2" x2="660.3" y2="307.2" stroke="#720000" stroke-width="1.4"/>
<line x1="661.5" y1="299.2" x2="663.5" y2="308.2" stroke="#720000" stroke-width="1.4"/>
<line x1="664.7" y1="300.2" x2="666.7" y2="309.2" stroke="#720000" stroke-width="1.4"/>
<line x1="668.0" y1="301.2" x2="670.0" y2="310.2" stroke="#720000" stroke-width="1.4"/>
<line x1="671.2" y1="302.2" x2="673.2" y2="311.2" stroke="#720000" stroke-width="1.4"/>
<line x1="674.4" y1="303.1" x2="676.4" y2="312.1" stroke="#720000" stroke-width="1.4"/>
<line x1="677.7" y1="304.1" x2="679.7" y2="313.1" stroke="#720000" stroke-width="1.4"/>
<line x1="680.9" y1="305.1" x2="682.9" y2="314.1" stroke="#720000" stroke-width="1.4"/>
<line x1="684.1" y1="306.1" x2="686.1" y2="315.1" stroke="#720000" stroke-width="1.4"/>
<line x1="687.4" y1="307.1" x2="689.4" y2="316.1" stroke="#720000" stroke-width="1.4"/>
<line x1="690.6" y1="308.1" x2="692.6" y2="317.1" stroke="#720000" stroke-width="1.4"/>
<line x1="693.8" y1="309.1" x2="695.8" y2="318.1" stroke="#720000" stroke-width="1.4"/>
<line x1="697.1" y1="310.1" x2="699.1" y2="319.1" stroke="#720000" stroke-width="1.4"/>
<line x1="700.3" y1="311.1" x2="702.3" y2="320.1" stroke="#720000" stroke-width="1.4"/>
<line x1="703.5" y1="312.1" x2="705.5" y2="321.1" stroke="#720000" stroke-width="1.4"/>
<line x1="706.8" y1="313.1" x2="708.8" y2="322.1" stroke="#720000" stroke-width="1.4"/>
<line x1="710.0" y1="314.1" x2="712.0" y2="323.1" stroke="#720000" stroke-width="1.4"/>
<line x1="713.2" y1="315.1" x2="715.2" y2="324.1" stroke="#720000" stroke-width="1.4"/>
<line x1="716.5" y1="316.1" x2="718.5" y2="325.1" stroke="#720000" stroke-width="1.4"/>
<line x1="719.7" y1="317.1" x2="721.7" y2="326.1" stroke="#720000" stroke-width="1.4"/>
<line x1="722.9" y1="318.1" x2="724.9" y2="327.1" stroke="#720000" stroke-width="1.4"/>
<line x1="726.1" y1="319.1" x2="728.1" y2="328.1" stroke="#720000" stroke-width="1.4"/>
<line x1="729.4" y1="320.1" x2="731.4" y2="329.1" stroke="#720000" stroke-width="1.4"/>
<line x1="732.6" y1="321.1" x2="734.6" y2="330.1" stroke="#720000" stroke-width="1.4"/>
<line x1="735.8" y1="322.0" x2="737.8" y2="331.0" stroke="#720000" stroke-width="1.4"/>
<line x1="739.1" y1="323.0" x2="741.1" y2="332.0" stroke="#720000" stroke-width="1.4"/>
<line x1="742.3" y1="324.0" x2="744.3" y2="333.0" stroke="#720000" stroke-width="1.4"/>
<line x1="745.5" y1="325.0" x2="747.5" y2="334.0" stroke="#720000" stroke-width="1.4"/>
<line x1="748.8" y1="326.0" x2="750.8" y2="335.0" stroke="#720000" stroke-width="1.4"/>
<line x1="752.0" y1="327.0" x2="754.0" y2="336.0" stroke="#720000" stroke-width="1.4"/>
<line x1="755.2" y1="328.0" x2="757.2" y2="337.0" stroke="#720000" stroke-width="1.4"/>
<line x1="758.5" y1="329.0" x2="760.5" y2="338.0" stroke="#720000" stroke-width="1.4"/>
<line x1="761.7" y1="330.0" x2="763.7" y2="339.0" stroke="#720000" stroke-width="1.4"/>
<line x1="764.9" y1="331.0" x2="766.9" y2="340.0" stroke="#720000" stroke-width="1.4"/>
<line x1="768.2" y1="332.0" x2="770.2" y2="341.0" stroke="#720000" stroke-width="1.4"/>
<line x1="771.4" y1="333.0" x2="773.4" y2="342.0" stroke="#720000" stroke-width="1.4"/>
<line x1="774.6" y1="334.0" x2="776.6" y2="343.0" stroke="#720000" stroke-width="1.4"/>
<line x1="777.9" y1="335.0" x2="779.9" y2="344.0" stroke="#720000" stroke-width="1.4"/>
<line x1="781.1" y1="336.0" x2="783.1" y2="345.0" stroke="#720000" stroke-width="1.4"/>
<line x1="784.3" y1="337.0" x2="786.3" y2="346.0" stroke="#720000" stroke-width="1.4"/>
<line x1="787.6" y1="338.0" x2="789.6" y2="347.0" stroke="#720000" stroke-width="1.4"/>
<line x1="790.8" y1="339.0" x2="792.8" y2="348.0" stroke="#720000" stroke-width="1.4"/>
<line x1="794.0" y1="340.0" x2="796.0" y2="349.0" stroke="#720000" stroke-width="1.4"/>
<line x1="797.3" y1="340.9" x2="799.3" y2="349.9" stroke="#720000" stroke-width="1.4"/>
<line x1="800.5" y1="341.9" x2="802.5" y2="350.9" stroke="#720000" stroke-width="1.4"/>
<line x1="803.7" y1="342.9" x2="805.7" y2="351.9" stroke="#720000" stroke-width="1.4"/>
<line x1="807.0" y1="343.9" x2="809.0" y2="352.9" stroke="#720000" stroke-width="1.4"/>
<line x1="810.2" y1="344.9" x2="812.2" y2="353.9" stroke="#720000" stroke-width="1.4"/>
<line x1="813.4" y1="345.9" x2="815.4" y2="354.9" stroke="#720000" stroke-width="1.4"/>
<line x1="816.7" y1="346.9" x2="818.7" y2="355.9" stroke="#720000" stroke-width="1.4"/>
<line x1="819.9" y1="347.9" x2="821.9" y2="356.9" stroke="#720000" stroke-width="1.4"/>
<line x1="823.1" y1="348.9" x2="825.1" y2="357.9" stroke="#720000" stroke-width="1.4"/>
<line x1="826.4" y1="349.9" x2="828.4" y2="358.9" stroke="#720000" stroke-width="1.4"/>
<line x1="829.6" y1="350.9" x2="831.6" y2="359.9" stroke="#720000" stroke-width="1.4"/>
<line x1="832.8" y1="351.9" x2="834.8" y2="360.9" stroke="#720000" stroke-width="1.4"/>
<line x1="836.1" y1="352.9" x2="838.1" y2="361.9" stroke="#720000" stroke-width="1.4"/>
<polygon points="611.4,283.1 614.7,285.1 614.7,466.4 611.4,464.4" fill="#6a0000"/>
<polygon points="614.7,293.1 637.1,300.0 637.1,316.1 614.7,309.2" fill="#880000"/>
<polygon points="614.7,309.2 637.1,316.1 637.1,332.2 614.7,325.4" fill="#880000"/>
<polygon points="614.7,325.4 637.1,332.2 637.1,348.4 614.7,341.5" fill="#880000"/>
<polygon points="614.7,341.5 637.1,348.4 637.1,364.5 614.7,357.6" fill="#880000"/>
<polygon points="614.7,357.6 637.1,364.5 637.1,380.6 614.7,373.8" fill="#890000"/>
<polygon points="614.7,373.8 637.1,380.6 637.1,396.8 614.7,389.9" fill="#8a0000"/>
<polygon points="614.7,389.9 637.1,396.8 637.1,412.9 614.7,406.0" fill="#8d0000"/>
<polygon points="614.7,406.0 637.1,412.9 637.1,429.0 614.7,422.1" fill="#940000"/>
<polygon points="614.7,422.1 637.1,429.0 637.1,445.1 614.7,438.3" fill="#a30000"/>
<polygon points="614.7,438.3 637.1,445.1 637.1,461.3 614.7,454.4" fill="#c40000"/>
<polygon points="637.1,300.0 659.4,306.9 659.4,323.0 637.1,316.1" fill="#880000"/>
<polygon points="637.1,316.1 659.4,323.0 659.4,339.1 637.1,332.2" fill="#880000"/>
<polygon points="637.1,332.2 659.4,339.1 659.4,355.2 637.1,348.4" fill="#880000"/>
<polygon points="637.1,348.4 659.4,355.2 659.4,371.4 637.1,364.5" fill="#880000"/>
<polygon points="637.1,364.5 659.4,371.4 659.4,387.5 637.1,380.6" fill="#890000"/>
<polygon points="637.1,380.6 659.4,387.5 659.4,403.6 637.1,396.8" fill="#8a0000"/>
<polygon points="637.1,396.8 659.4,403.6 659.4,419.8 637.1,412.9" fill="#8d0000"/>
<polygon points="637.1,412.9 659.4,419.8 659.4,435.9 637.1,429.0" fill="#920000"/>
<polygon points="637.1,429.0 659.4,435.9 659.4,452.0 637.1,445.1" fill="#9c0000"/>
<polygon points="637.1,445.1 659.4,452.0 659.4,468.2 637.1,461.3" fill="#a30000"/>
<polygon points="659.4,306.9 681.8,313.7 681.8,329.9 659.4,323.0" fill="#880000"/>
<polygon points="659.4,323.0 681.8,329.9 681.8,346.0 659.4,339.1" fill="#880000"/>
<polygon points="659.4,339.1 681.8,346.0 681.8,362.1 659.4,355.2" fill="#880000"/>
<polygon points="659.4,355.2 681.8,362.1 681.8,378.3 659.4,371.4" fill="#880000"/>
<polygon points="659.4,371.4 681.8,378.3 681.8,394.4 659.4,387.5" fill="#880000"/>
<polygon points="659.4,387.5 681.8,394.4 681.8,410.5 659.4,403.6" fill="#890000"/>
<polygon points="659.4,403.6 681.8,410.5 681.8,426.6 659.4,419.8" fill="#8b0000"/>
<polygon points="659.4,419.8 681.8,426.6 681.8,442.8 659.4,435.9" fill="#8e0000"/>
<polygon points="659.4,435.9 681.8,442.8 681.8,458.9 659.4,452.0" fill="#920000"/>
<polygon points="659.4,452.0 681.8,458.9 681.8,475.0 659.4,468.2" fill="#940000"/>
<polygon points="681.8,313.7 704.1,320.6 704.1,336.8 681.8,329.9" fill="#880000"/>
<polygon points="681.8,329.9 704.1,336.8 704.1,352.9 681.8,346.0" fill="#880000"/>
<polygon points="681.8,346.0 704.1,352.9 704.1,369.0 681.8,362.1" fill="#880000"/>
<polygon points="681.8,362.1 704.1,369.0 704.1,385.1 681.8,378.3" fill="#880000"/>
<polygon points="681.8,378.3 704.1,385.1 704.1,401.3 681.8,394.4" fill="#880000"/>
<polygon points="681.8,394.4 704.1,401.3 704.1,417.4 681.8,410.5" fill="#890000"/>
<polygon points="681.8,410.5 704.1,417.4 704.1,433.5 681.8,426.6" fill="#8a0000"/>
<polygon points="681.8,426.6 704.1,433.5 704.1,449.7 681.8,442.8" fill="#8b0000"/>
<polygon points="681.8,442.8 704.1,449.7 704.1,465.8 681.8,458.9" fill="#8d0000"/>
<polygon points="681.8,458.9 704.1,465.8 704.1,481.9 681.8,475.0" fill="#8d0000"/>
<polygon points="704.1,320.6 726.5,327.5 726.5,343.6 704.1,336.8" fill="#890000"/>
<polygon points="704.1,336.8 726.5,343.6 726.5,359.8 704.1,352.9" fill="#890000"/>
<polygon points="704.1,352.9 726.5,359.8 726.5,375.9 704.1,369.0" fill="#880000"/>
<polygon points="704.1,369.0 726.5,375.9 726.5,392.0 704.1,385.1" fill="#880000"/>
<polygon points="704.1,385.1 726.5,392.0 726.5,408.1 704.1,401.3" fill="#880000"/>
<polygon points="704.1,401.3 726.5,408.1 726.5,424.3 704.1,417.4" fill="#880000"/>
<polygon points="704.1,417.4 726.5,424.3 726.5,440.4 704.1,433.5" fill="#890000"/>
<polygon points="704.1,433.5 726.5,440.4 726.5,456.5 704.1,449.7" fill="#890000"/>
<polygon points="704.1,449.7 726.5,456.5 726.5,472.7 704.1,465.8" fill="#8a0000"/>
<polygon points="704.1,465.8 726.5,472.7 726.5,488.8 704.1,481.9" fill="#8a0000"/>
<polygon points="726.5,327.5 748.9,334.4 748.9,350.5 726.5,343.6" fill="#8a0000"/>
<polygon points="726.5,343.6 748.9,350.5 748.9,366.6 726.5,359.8" fill="#8a0000"/>
<polygon points="726.5,359.8 748.9,366.6 748.9,382.8 726.5,375.9" fill="#890000"/>
<polygon points="726.5,375.9 748.9,382.8 748.9,398.9 726.5,392.0" fill="#890000"/>
<polygon points="726.5,392.0 748.9,398.9 748.9,415.0 726.5,408.1" fill="#880000"/>
<polygon points="726.5,408.1 748.9,415.0 748.9,431.2 726.5,424.3" fill="#880000"/>
<polygon points="726.5,424.3 748.9,431.2 748.9,447.3 726.5,440.4" fill="#880000"/>
<polygon points="726.5,440.4 748.9,447.3 748.9,463.4 726.5,456.5" fill="#880000"/>
<polygon points="726.5,456.5 748.9,463.4 748.9,479.5 726.5,472.7" fill="#890000"/>
<polygon points="726.5,472.7 748.9,479.5 748.9,495.7 726.5,488.8" fill="#890000"/>
<polygon points="748.9,334.4 771.2,341.3 771.2,357.4 748.9,350.5" fill="#8d0000"/>
<polygon points="748.9,350.5 771.2,357.4 771.2,373.5 748.9,366.6" fill="#8d0000"/>
<polygon points="748.9,366.6 771.2,373.5 771.2,389.6 748.9,382.8" fill="#8b0000"/>
<polygon points="748.9,382.8 771.2,389.6 771.2,405.8 748.9,398.9" fill="#8a0000"/>
<polygon points="748.9,398.9 771.2,405.8 771.2,421.9 748.9,415.0" fill="#890000"/>
<polygon points="748.9,415.0 771.2,421.9 771.2,438.0 748.9,431.2" fill="#880000"/>
<polygon points="748.9,431.2 771.2,438.0 771.2,454.2 748.9,447.3" fill="#880000"/>
<polygon points="748.9,447.3 771.2,454.2 771.2,470.3 748.9,463.4" fill="#880000"/>
<polygon points="748.9,463.4 771.2,470.3 771.2,486.4 748.9,479.5" fill="#880000"/>
<polygon points="748.9,479.5 771.2,486.4 771.2,502.6 748.9,495.7" fill="#880000"/>
<polygon points="771.2,341.3 793.6,348.1 793.6,364.3 771.2,357.4" fill="#940000"/>
<polygon points="771.2,357.4 793.6,364.3 793.6,380.4 771.2,373.5" fill="#920000"/>
<polygon points="771.2,373.5 793.6,380.4 793.6,396.5 771.2,389.6" fill="#8e0000"/>
<polygon points="771.2,389.6 793.6,396.5 793.6,412.7 771.2,405.8" fill="#8b0000"/>
<polygon points="771.2,405.8 793.6,412.7 793.6,428.8 771.2,421.9" fill="#890000"/>
<polygon points="771.2,421.9 793.6,428.8 793.6,444.9 771.2,438.0" fill="#880000"/>
<polygon points="771.2,438.0 793.6,444.9 793.6,461.0 771.2,454.2" fill="#880000"/>
<polygon points="771.2,454.2 793.6,461.0 793.6,477.2 771.2,470.3" fill="#880000"/>
<polygon points="771.2,470.3 793.6,477.2 793.6,493.3 771.2,486.4" fill="#880000"/>
<polygon points="771.2,486.4 793.6,493.3 793.6,509.4 771.2,502.6" fill="#880000"/>
<polygon points="793.6,348.1 815.9,355.0 815.9,371.1 793.6,364.3" fill="#a30000"/>
<polygon points="793.6,364.3 815.9,371.1 815.9,387.3 793.6,380.4" fill="#9c0000"/>
<polygon points="793.6,380.4 815.9,387.3 815.9,403.4 793.6,396.5" fill="#920000"/>
<polygon points="793.6,396.5 815.9,403.4 815.9,419.5 793.6,412.7" fill="#8d0000"/>
<polygon points="793.6,412.7 815.9,419.5 815.9,435.7 793.6,428.8" fill="#8a0000"/>
<polygon points="793.6,428.8 815.9,435.7 815.9,451.8 793.6,444.9" fill="#890000"/>
<polygon points="793.6,444.9 815.9,451.8 815.9,467.9 793.6,461.0" fill="#880000"/>
<polygon points="793.6,461.0 815.9,467.9 815.9,484.1 793.6,477.2" fill="#880000"/>
<polygon points="793.6,477.2 815.9,484.1 815.9,500.2 793.6,493.3" fill="#880000"/>
<polygon points="793.6,493.3 815.9,500.2 815.9,516.3 793.6,509.4" fill="#880000"/>
<polygon points="815.9,355.0 838.3,361.9 838.3,378.0 815.9,371.1" fill="#c40000"/>
<polygon points="815.9,371.1 838.3,378.0 838.3,394.2 815.9,387.3" fill="#a30000"/>
<polygon points="815.9,387.3 838.3,394.2 838.3,410.3 815.9,403.4" fill="#940000"/>
<polygon points="815.9,403.4 838.3,410.3 838.3,426.4 815.9,419.5" fill="#8d0000"/>
<polygon points="815.9,419.5 838.3,426.4 838.3,442.5 815.9,435.7" fill="#8a0000"/>
<polygon points="815.9,435.7 838.3,442.5 838.3,458.7 815.9,451.8" fill="#890000"/>
<polygon points="815.9,451.8 838.3,458.7 838.3,474.8 815.9,467.9" fill="#880000"/>
<polygon points="815.9,467.9 838.3,474.8 838.3,490.9 815.9,484.1" fill="#880000"/>
<polygon points="815.9,484.1 838.3,490.9 838.3,507.1 815.9,500.2" fill="#880000"/>
<polygon points="815.9,500.2 838.3,507.1 838.3,523.2 815.9,516.3" fill="#880000"/>
<line x1="637.1" y1="300.0" x2="637.1" y2="461.3" stroke="#2a0000" stroke-width="1.2"/>
<line x1="659.4" y1="306.9" x2="659.4" y2="468.2" stroke="#2a0000" stroke-width="1.2"/>
<line x1="681.8" y1="313.7" x2="681.8" y2="475.0" stroke="#2a0000" stroke-width="1.2"/>
<line x1="704.1" y1="320.6" x2="704.1" y2="481.9" stroke="#2a0000" stroke-width="1.2"/>
<line x1="726.5" y1="327.5" x2="726.5" y2="488.8" stroke="#2a0000" stroke-width="1.2"/>
<line x1="748.9" y1="334.4" x2="748.9" y2="495.7" stroke="#2a0000" stroke-width="1.2"/>
<line x1="771.2" y1="341.3" x2="771.2" y2="502.6" stroke="#2a0000" stroke-width="1.2"/>
<line x1="793.6" y1="348.1" x2="793.6" y2="509.4" stroke="#2a0000" stroke-width="1.2"/>
<line x1="815.9" y1="355.0" x2="815.9" y2="516.3" stroke="#2a0000" stroke-width="1.2"/>
<line x1="614.7" y1="309.2" x2="838.3" y2="378.0" stroke="#300000" stroke-width="1" stroke-dasharray="3,1.5"/>
<line x1="611.4" y1="308.2" x2="614.7" y2="309.2" stroke="#300000" stroke-width="1"/>
<line x1="614.7" y1="325.4" x2="838.3" y2="394.2" stroke="#300000" stroke-width="1" stroke-dasharray="3,1.5"/>
<line x1="611.4" y1="324.4" x2="614.7" y2="325.4" stroke="#300000" stroke-width="1"/>
<line x1="614.7" y1="341.5" x2="838.3" y2="410.3" stroke="#300000" stroke-width="1" stroke-dasharray="3,1.5"/>
<line x1="611.4" y1="340.5" x2="614.7" y2="341.5" stroke="#300000" stroke-width="1"/>
<line x1="614.7" y1="357.6" x2="838.3" y2="426.4" stroke="#300000" stroke-width="1" stroke-dasharray="3,1.5"/>
<line x1="611.4" y1="356.6" x2="614.7" y2="357.6" stroke="#300000" stroke-width="1"/>
<line x1="614.7" y1="373.8" x2="838.3" y2="442.5" stroke="#300000" stroke-width="1" stroke-dasharray="3,1.5"/>
<line x1="611.4" y1="372.8" x2="614.7" y2="373.8" stroke="#300000" stroke-width="1"/>
<line x1="614.7" y1="389.9" x2="838.3" y2="458.7" stroke="#300000" stroke-width="1" stroke-dasharray="3,1.5"/>
<line x1="611.4" y1="388.9" x2="614.7" y2="389.9" stroke="#300000" stroke-width="1"/>
<line x1="614.7" y1="406.0" x2="838.3" y2="474.8" stroke="#300000" stroke-width="1" stroke-dasharray="3,1.5"/>
<line x1="611.4" y1="405.0" x2="614.7" y2="406.0" stroke="#300000" stroke-width="1"/>
<line x1="614.7" y1="422.1" x2="838.3" y2="490.9" stroke="#300000" stroke-width="1" stroke-dasharray="3,1.5"/>
<line x1="611.4" y1="421.1" x2="614.7" y2="422.1" stroke="#300000" stroke-width="1"/>
<line x1="614.7" y1="438.3" x2="838.3" y2="507.1" stroke="#300000" stroke-width="1" stroke-dasharray="3,1.5"/>
<line x1="611.4" y1="437.3" x2="614.7" y2="438.3" stroke="#300000" stroke-width="1"/>
<polygon points="614.7,454.4 838.3,524.2 838.3,534.7 614.7,464.9" fill="#300000"/>
<line x1="615.7" y1="455.4" x2="617.7" y2="464.9" stroke="#780000" stroke-width="1.4"/>
<line x1="618.9" y1="456.3" x2="620.9" y2="465.8" stroke="#780000" stroke-width="1.4"/>
<line x1="622.1" y1="457.3" x2="624.1" y2="466.8" stroke="#780000" stroke-width="1.4"/>
<line x1="625.3" y1="458.3" x2="627.3" y2="467.8" stroke="#780000" stroke-width="1.4"/>
<line x1="628.5" y1="459.3" x2="630.5" y2="468.8" stroke="#780000" stroke-width="1.4"/>
<line x1="631.7" y1="460.3" x2="633.7" y2="469.8" stroke="#780000" stroke-width="1.4"/>
<line x1="634.9" y1="461.3" x2="636.9" y2="470.8" stroke="#780000" stroke-width="1.4"/>
<line x1="638.1" y1="462.2" x2="640.1" y2="471.7" stroke="#780000" stroke-width="1.4"/>
<line x1="641.3" y1="463.2" x2="643.3" y2="472.7" stroke="#780000" stroke-width="1.4"/>
<line x1="644.4" y1="464.2" x2="646.4" y2="473.7" stroke="#780000" stroke-width="1.4"/>
<line x1="647.6" y1="465.2" x2="649.6" y2="474.7" stroke="#780000" stroke-width="1.4"/>
<line x1="650.8" y1="466.2" x2="652.8" y2="475.7" stroke="#780000" stroke-width="1.4"/>
<line x1="654.0" y1="467.2" x2="656.0" y2="476.7" stroke="#780000" stroke-width="1.4"/>
<line x1="657.2" y1="468.1" x2="659.2" y2="477.6" stroke="#780000" stroke-width="1.4"/>
<line x1="660.4" y1="469.1" x2="662.4" y2="478.6" stroke="#780000" stroke-width="1.4"/>
<line x1="663.6" y1="470.1" x2="665.6" y2="479.6" stroke="#780000" stroke-width="1.4"/>
<line x1="666.8" y1="471.1" x2="668.8" y2="480.6" stroke="#780000" stroke-width="1.4"/>
<line x1="670.0" y1="472.1" x2="672.0" y2="481.6" stroke="#780000" stroke-width="1.4"/>
<line x1="673.2" y1="473.1" x2="675.2" y2="482.6" stroke="#780000" stroke-width="1.4"/>
<line x1="676.4" y1="474.0" x2="678.4" y2="483.5" stroke="#780000" stroke-width="1.4"/>
<line x1="679.6" y1="475.0" x2="681.6" y2="484.5" stroke="#780000" stroke-width="1.4"/>
<line x1="682.8" y1="476.0" x2="684.8" y2="485.5" stroke="#780000" stroke-width="1.4"/>
<line x1="686.0" y1="477.0" x2="688.0" y2="486.5" stroke="#780000" stroke-width="1.4"/>
<line x1="689.2" y1="478.0" x2="691.2" y2="487.5" stroke="#780000" stroke-width="1.4"/>
<line x1="692.4" y1="479.0" x2="694.4" y2="488.5" stroke="#780000" stroke-width="1.4"/>
<line x1="695.6" y1="479.9" x2="697.6" y2="489.4" stroke="#780000" stroke-width="1.4"/>
<line x1="698.8" y1="480.9" x2="700.8" y2="490.4" stroke="#780000" stroke-width="1.4"/>
<line x1="701.9" y1="481.9" x2="703.9" y2="491.4" stroke="#780000" stroke-width="1.4"/>
<line x1="705.1" y1="482.9" x2="707.1" y2="492.4" stroke="#780000" stroke-width="1.4"/>
<line x1="708.3" y1="483.9" x2="710.3" y2="493.4" stroke="#780000" stroke-width="1.4"/>
<line x1="711.5" y1="484.8" x2="713.5" y2="494.3" stroke="#780000" stroke-width="1.4"/>
<line x1="714.7" y1="485.8" x2="716.7" y2="495.3" stroke="#780000" stroke-width="1.4"/>
<line x1="717.9" y1="486.8" x2="719.9" y2="496.3" stroke="#780000" stroke-width="1.4"/>
<line x1="721.1" y1="487.8" x2="723.1" y2="497.3" stroke="#780000" stroke-width="1.4"/>
<line x1="724.3" y1="488.8" x2="726.3" y2="498.3" stroke="#780000" stroke-width="1.4"/>
<line x1="727.5" y1="489.8" x2="729.5" y2="499.3" stroke="#780000" stroke-width="1.4"/>
<line x1="730.7" y1="490.7" x2="732.7" y2="500.2" stroke="#780000" stroke-width="1.4"/>
<line x1="733.9" y1="491.7" x2="735.9" y2="501.2" stroke="#780000" stroke-width="1.4"/>
<line x1="737.1" y1="492.7" x2="739.1" y2="502.2" stroke="#780000" stroke-width="1.4"/>
<line x1="740.3" y1="493.7" x2="742.3" y2="503.2" stroke="#780000" stroke-width="1.4"/>
<line x1="743.5" y1="494.7" x2="745.5" y2="504.2" stroke="#780000" stroke-width="1.4"/>
<line x1="746.7" y1="495.7" x2="748.7" y2="505.2" stroke="#780000" stroke-width="1.4"/>
<line x1="749.9" y1="496.6" x2="751.9" y2="506.1" stroke="#780000" stroke-width="1.4"/>
<line x1="753.1" y1="497.6" x2="755.1" y2="507.1" stroke="#780000" stroke-width="1.4"/>
<line x1="756.2" y1="498.6" x2="758.2" y2="508.1" stroke="#780000" stroke-width="1.4"/>
<line x1="759.4" y1="499.6" x2="761.4" y2="509.1" stroke="#780000" stroke-width="1.4"/>
<line x1="762.6" y1="500.6" x2="764.6" y2="510.1" stroke="#780000" stroke-width="1.4"/>
<line x1="765.8" y1="501.6" x2="767.8" y2="511.1" stroke="#780000" stroke-width="1.4"/>
<line x1="769.0" y1="502.5" x2="771.0" y2="512.0" stroke="#780000" stroke-width="1.4"/>
<line x1="772.2" y1="503.5" x2="774.2" y2="513.0" stroke="#780000" stroke-width="1.4"/>
<line x1="775.4" y1="504.5" x2="777.4" y2="514.0" stroke="#780000" stroke-width="1.4"/>
<line x1="778.6" y1="505.5" x2="780.6" y2="515.0" stroke="#780000" stroke-width="1.4"/>
<line x1="781.8" y1="506.5" x2="783.8" y2="516.0" stroke="#780000" stroke-width="1.4"/>
<line x1="785.0" y1="507.5" x2="787.0" y2="517.0" stroke="#780000" stroke-width="1.4"/>
<line x1="788.2" y1="508.4" x2="790.2" y2="517.9" stroke="#780000" stroke-width="1.4"/>
<line x1="791.4" y1="509.4" x2="793.4" y2="518.9" stroke="#780000" stroke-width="1.4"/>
<line x1="794.6" y1="510.4" x2="796.6" y2="519.9" stroke="#780000" stroke-width="1.4"/>
<line x1="797.8" y1="511.4" x2="799.8" y2="520.9" stroke="#780000" stroke-width="1.4"/>
<line x1="801.0" y1="512.4" x2="803.0" y2="521.9" stroke="#780000" stroke-width="1.4"/>
<line x1="804.2" y1="513.4" x2="806.2" y2="522.9" stroke="#780000" stroke-width="1.4"/>
<line x1="807.4" y1="514.3" x2="809.4" y2="523.8" stroke="#780000" stroke-width="1.4"/>
<line x1="810.6" y1="515.3" x2="812.6" y2="524.8" stroke="#780000" stroke-width="1.4"/>
<line x1="813.7" y1="516.3" x2="815.7" y2="525.8" stroke="#780000" stroke-width="1.4"/>
<line x1="816.9" y1="517.3" x2="818.9" y2="526.8" stroke="#780000" stroke-width="1.4"/>
<line x1="820.1" y1="518.3" x2="822.1" y2="527.8" stroke="#780000" stroke-width="1.4"/>
<line x1="823.3" y1="519.2" x2="825.3" y2="528.7" stroke="#780000" stroke-width="1.4"/>
<line x1="826.5" y1="520.2" x2="828.5" y2="529.7" stroke="#780000" stroke-width="1.4"/>
<line x1="829.7" y1="521.2" x2="831.7" y2="530.7" stroke="#780000" stroke-width="1.4"/>
<line x1="832.9" y1="522.2" x2="834.9" y2="531.7" stroke="#780000" stroke-width="1.4"/>
<line x1="836.1" y1="523.2" x2="838.1" y2="532.7" stroke="#780000" stroke-width="1.4"/>
<polygon points="614.7,464.9 838.3,534.7 838.3,538.2 614.7,468.4" fill="#b80000"/>
<line x1="614.7" y1="466.6" x2="838.3" y2="536.4" stroke="#700000" stroke-width="0.7"/>
<line x1="637.1" y1="461.3" x2="636.1" y2="475.3" stroke="#2a0000" stroke-width="1"/>
<line x1="659.4" y1="468.2" x2="658.4" y2="482.2" stroke="#2a0000" stroke-width="1"/>
<line x1="681.8" y1="475.0" x2="680.8" y2="489.0" stroke="#2a0000" stroke-width="1"/>
<line x1="704.1" y1="481.9" x2="703.1" y2="495.9" stroke="#2a0000" stroke-width="1"/>
<line x1="726.5" y1="488.8" x2="725.5" y2="502.8" stroke="#2a0000" stroke-width="1"/>
<line x1="748.9" y1="495.7" x2="747.9" y2="509.7" stroke="#2a0000" stroke-width="1"/>
<line x1="771.2" y1="502.6" x2="770.2" y2="516.6" stroke="#2a0000" stroke-width="1"/>
<line x1="793.6" y1="509.4" x2="792.6" y2="523.4" stroke="#2a0000" stroke-width="1"/>
<line x1="815.9" y1="516.3" x2="814.9" y2="530.3" stroke="#2a0000" stroke-width="1"/></svg></div><div class="abs" style="left:311px;top:54px;width:281px;height:58px;background:#0d1117;border:1px solid #30363d"></div><div class="it" style="left:326.5px;top:66.00px;font-size:12px;line-height:15px;letter-spacing:-0.6px;color:#7d8590">Max Temperature : <b>4544.5774 °C</b></div>
<div class="it" style="left:326.5px;top:86.00px;font-size:12px;line-height:15px;letter-spacing:-0.6px;color:#7d8590">Thermal Conductance G = <b>2.2102e-7 W/°C</b></div>
<div class="abs" style="left:1039px;top:54px;width:100px;height:202px;background:#0d1117;border:1px solid #30363d"></div><div class="lg" style="left:1068px;top:64.00px;font-size:11px;line-height:14px;letter-spacing:-0.6px;">T [°C]</div>
<div class="abs" style="left:1048px;top:85px;width:18px;height:160px;border:1px solid #3a3f46;background:linear-gradient(to bottom,#800000 0%,#e00000 10%,#ff4000 18%,#ff9000 27%,#f5c000 33%,#e8f020 39%,#b0f060 46%,#60f0b0 53%,#10f0e0 60%,#00b0f0 69%,#0060ff 77%,#0010f0 85%,#000080 100%)"></div><div class="lg" style="left:1069.5px;top:80.00px;font-size:10px;line-height:12px;letter-spacing:-0.6px;">4562.645°</div>
<div class="lg" style="left:1069.5px;top:112.00px;font-size:10px;line-height:12px;letter-spacing:-0.6px;">3737.313°</div>
<div class="lg" style="left:1069.5px;top:144.00px;font-size:10px;line-height:12px;letter-spacing:-0.6px;">2911.981°</div>
<div class="lg" style="left:1069.5px;top:176.00px;font-size:10px;line-height:12px;letter-spacing:-0.6px;">2086.649°</div>
<div class="lg" style="left:1069.5px;top:207.00px;font-size:10px;line-height:12px;letter-spacing:-0.6px;">1261.318°</div>
<div class="lg" style="left:1069.5px;top:239.00px;font-size:10px;line-height:12px;letter-spacing:-0.6px;">435.986°</div>
<div class="t" style="left:571px;top:758.00px;font-size:10px;line-height:12px;letter-spacing:0.28px;color:#3a3f47">Drag: rotate  |  Scroll: zoom  |  Shift+Drag: pan</div>
<div class="abs" style="left:299px;top:779px;width:847px;height:1px;background:#2b3139"></div><div class="abs" style="left:299px;top:780px;width:847px;height:38px;background:#0a0d14"></div><div class="abs" style="left:299px;top:818px;width:847px;height:1px;background:#2b3139"></div><div class="abs" style="left:299px;top:819px;width:847px;height:301px;background:#0a0d14"></div><div class="tt" style="left:311px;top:786.00px;font-size:10.5px;line-height:13px;letter-spacing:0.72px;">TRANSIENT RESPONSE — T AT (L/2, L/2,<br>T<sub>S</sub>)</div>
<div class="tk" style="left:590px;top:787.00px;font-size:11px;line-height:13px;letter-spacing:-0.6px;">τ<br>=</div>
<div class="tk" style="left:669.5px;top:787.00px;font-size:11px;line-height:13px;letter-spacing:-0.6px;">ms<br>=</div>
<div class="tk" style="left:694px;top:787.00px;font-size:11px;line-height:13px;letter-spacing:-0.6px;">|</div>
<div class="tk" style="left:711.4px;top:787.00px;font-size:11px;line-height:13px;letter-spacing:-0.6px;">C</div>
<div class="tk" style="left:808.9px;top:787.00px;font-size:11px;line-height:13px;letter-spacing:-0.6px;">J/K<br>=</div>
<div class="tk" style="left:839.2px;top:787.00px;font-size:11px;line-height:13px;letter-spacing:-0.6px;">|</div>
<div class="tk" style="left:857.7px;top:787.00px;font-size:11px;line-height:13px;letter-spacing:-0.6px;">T∞</div>
<div class="tk" style="left:971.3px;top:787.00px;font-size:11px;line-height:13px;letter-spacing:-0.6px;">°C<br>t</div>
<div class="tk" style="left:994.1px;top:787.00px;font-size:11px;line-height:13px;letter-spacing:-0.6px;">|</div>
<div class="tk" style="left:1065.5px;top:787.00px;font-size:11px;line-height:13px;letter-spacing:-0.6px;">=</div>
<div class="tk" style="left:1126.6px;top:787.00px;font-size:11px;line-height:13px;letter-spacing:-0.6px;">ms</div>
<div class="tk" style="left:1034px;top:787.00px;font-size:9px;line-height:11px;letter-spacing:-0.5px;">end</div>
<div class="tv" style="left:623.2px;top:787.00px;font-size:11px;line-height:13px;letter-spacing:-0.6px;">12.35</div>
<div class="tv" style="left:745.4px;top:787.00px;font-size:11px;line-height:13px;letter-spacing:-0.6px;">2.730e-<br>9</div>
<div class="tv" style="left:901px;top:787.00px;font-size:11px;line-height:13px;letter-spacing:-0.6px;">4544.5774</div>
<div class="tv" style="left:1087.4px;top:787.00px;font-size:11px;line-height:13px;letter-spacing:-0.6px;">78.0</div>
<svg class="abs" style="left:0;top:0" width="1146" height="1120" viewBox="0 0 1146 1120"><defs><filter id="glow" x="-10%" y="-10%" width="120%" height="120%"><feGaussianBlur stdDeviation="2"/></filter></defs><line x1="361" y1="835.0" x2="1131" y2="835.0" stroke="#151b23" stroke-width="1"/>
<line x1="361" y1="884.0" x2="1131" y2="884.0" stroke="#151b23" stroke-width="1"/>
<line x1="361" y1="933.0" x2="1131" y2="933.0" stroke="#151b23" stroke-width="1"/>
<line x1="361" y1="982.0" x2="1131" y2="982.0" stroke="#151b23" stroke-width="1"/>
<line x1="361" y1="1031.0" x2="1131" y2="1031.0" stroke="#151b23" stroke-width="1"/>
<line x1="361" y1="1080.0" x2="1131" y2="1080.0" stroke="#151b23" stroke-width="1"/>
<line x1="361.0" y1="835" x2="361.0" y2="1080" stroke="#151b23" stroke-width="1"/>
<line x1="489.3" y1="835" x2="489.3" y2="1080" stroke="#151b23" stroke-width="1"/>
<line x1="617.7" y1="835" x2="617.7" y2="1080" stroke="#151b23" stroke-width="1"/>
<line x1="746.0" y1="835" x2="746.0" y2="1080" stroke="#151b23" stroke-width="1"/>
<line x1="874.3" y1="835" x2="874.3" y2="1080" stroke="#151b23" stroke-width="1"/>
<line x1="1002.7" y1="835" x2="1002.7" y2="1080" stroke="#151b23" stroke-width="1"/>
<line x1="1131.0" y1="835" x2="1131.0" y2="1080" stroke="#151b23" stroke-width="1"/>
<text x="356.5" y="839.0" text-anchor="end" class="ax">4771.806</text>
<text x="356.5" y="888.0" text-anchor="end" class="ax">3821.445</text>
<text x="356.5" y="937.0" text-anchor="end" class="ax">2871.084</text>
<text x="356.5" y="986.0" text-anchor="end" class="ax">1920.723</text>
<text x="356.5" y="1035.0" text-anchor="end" class="ax">970.361</text>
<text x="356.5" y="1084.0" text-anchor="end" class="ax">20.000</text>
<text x="361.0" y="1094" text-anchor="middle" class="ax">0.0</text>
<text x="489.3" y="1094" text-anchor="middle" class="ax">13.0</text>
<text x="617.7" y="1094" text-anchor="middle" class="ax">26.0</text>
<text x="746.0" y="1094" text-anchor="middle" class="ax">39.0</text>
<text x="874.3" y="1094" text-anchor="middle" class="ax">52.0</text>
<text x="1002.7" y="1094" text-anchor="middle" class="ax">65.0</text>
<text x="1131.0" y="1094" text-anchor="middle" class="ax">78.0</text>
<text x="746" y="1110" text-anchor="middle" class="ax">Time [ms]</text>
<text transform="translate(311,958) rotate(-90)" text-anchor="middle" class="ax">T [°C]</text>
<line x1="361" y1="846.7" x2="1131" y2="846.7" stroke="#d29922" stroke-opacity="0.6" stroke-width="1" stroke-dasharray="4,4"/>
<line x1="482.9" y1="835" x2="482.9" y2="1080" stroke="#f85149" stroke-opacity="0.55" stroke-width="1" stroke-dasharray="3,3"/>
<polyline points="364.9,1072.7 368.7,1065.7 372.6,1058.9 376.4,1052.3 380.2,1045.9 384.1,1039.7 387.9,1033.7 391.8,1027.9 395.6,1022.3 399.5,1016.8 403.4,1011.5 407.2,1006.4 411.1,1001.5 414.9,996.6 418.8,992.0 422.6,987.5 426.4,983.1 430.3,978.9 434.1,974.7 438.0,970.8 441.9,966.9 445.7,963.2 449.6,959.6 453.4,956.0 457.2,952.6 461.1,949.4 464.9,946.2 468.8,943.1 472.7,940.1 476.5,937.2 480.4,934.4 484.2,931.6 488.1,929.0 491.9,926.4 495.8,924.0 499.6,921.6 503.4,919.2 507.3,917.0 511.1,914.8 515.0,912.7 518.9,910.6 522.7,908.6 526.5,906.7 530.4,904.9 534.2,903.0 538.1,901.3 542.0,899.6 545.8,898.0 549.6,896.4 553.5,894.8 557.4,893.3 561.2,891.9 565.0,890.5 568.9,889.1 572.8,887.8 576.6,886.5 580.5,885.3 584.3,884.1 588.2,882.9 592.0,881.8 595.9,880.7 599.7,879.6 603.5,878.6 607.4,877.6 611.2,876.7 615.1,875.7 619.0,874.8 622.8,874.0 626.7,873.1 630.5,872.3 634.4,871.5 638.2,870.7 642.0,870.0 645.9,869.3 649.8,868.6 653.6,867.9 657.5,867.2 661.3,866.6 665.2,866.0 669.0,865.4 672.8,864.8 676.7,864.2 680.5,863.7 684.4,863.2 688.2,862.6 692.1,862.1 696.0,861.7 699.8,861.2 703.6,860.8 707.5,860.3 711.4,859.9 715.2,859.5 719.0,859.1 722.9,858.7 726.8,858.3 730.6,858.0 734.5,857.6 738.3,857.3 742.1,857.0 746.0,856.6 749.9,856.3 753.7,856.0 757.5,855.7 761.4,855.5 765.2,855.2 769.1,854.9 773.0,854.7 776.8,854.4 780.6,854.2 784.5,853.9 788.3,853.7 792.2,853.5 796.1,853.3 799.9,853.1 803.8,852.9 807.6,852.7 811.5,852.5 815.3,852.3 819.2,852.2 823.0,852.0 826.9,851.8 830.7,851.7 834.5,851.5 838.4,851.4 842.2,851.2 846.1,851.1 850.0,850.9 853.8,850.8 857.7,850.7 861.5,850.6 865.4,850.4 869.2,850.3 873.1,850.2 876.9,850.1 880.8,850.0 884.6,849.9 888.4,849.8 892.3,849.7 896.2,849.6 900.0,849.5 903.9,849.4 907.7,849.3 911.6,849.3 915.4,849.2 919.3,849.1 923.1,849.0 927.0,849.0 930.8,848.9 934.6,848.8 938.5,848.8 942.4,848.7 946.2,848.6 950.0,848.6 953.9,848.5 957.8,848.5 961.6,848.4 965.5,848.4 969.3,848.3 973.1,848.3 977.0,848.2 980.8,848.2 984.7,848.1 988.6,848.1 992.4,848.0 996.2,848.0 1000.1,847.9 1003.9,847.9 1007.8,847.9 1011.6,847.8 1015.5,847.8 1019.4,847.8 1023.2,847.7 1027.0,847.7 1030.9,847.7 1034.8,847.6 1038.6,847.6 1042.5,847.6 1046.3,847.6 1050.2,847.5 1054.0,847.5 1057.8,847.5 1061.7,847.5 1065.6,847.4 1069.4,847.4 1073.2,847.4 1077.1,847.4 1081.0,847.4 1084.8,847.3 1088.7,847.3 1092.5,847.3 1096.3,847.3 1100.2,847.3 1104.0,847.2 1107.9,847.2 1111.8,847.2 1115.6,847.2 1119.5,847.2 1123.3,847.2 1127.2,847.2 1131.0,847.1" fill="none" stroke="#58a6ff" stroke-opacity="0.25" stroke-width="6" filter="url(#glow)"/>
<polyline points="364.9,1072.7 368.7,1065.7 372.6,1058.9 376.4,1052.3 380.2,1045.9 384.1,1039.7 387.9,1033.7 391.8,1027.9 395.6,1022.3 399.5,1016.8 403.4,1011.5 407.2,1006.4 411.1,1001.5 414.9,996.6 418.8,992.0 422.6,987.5 426.4,983.1 430.3,978.9 434.1,974.7 438.0,970.8 441.9,966.9 445.7,963.2 449.6,959.6 453.4,956.0 457.2,952.6 461.1,949.4 464.9,946.2 468.8,943.1 472.7,940.1 476.5,937.2 480.4,934.4 484.2,931.6 488.1,929.0 491.9,926.4 495.8,924.0 499.6,921.6 503.4,919.2 507.3,917.0 511.1,914.8 515.0,912.7 518.9,910.6 522.7,908.6 526.5,906.7 530.4,904.9 534.2,903.0 538.1,901.3 542.0,899.6 545.8,898.0 549.6,896.4 553.5,894.8 557.4,893.3 561.2,891.9 565.0,890.5 568.9,889.1 572.8,887.8 576.6,886.5 580.5,885.3 584.3,884.1 588.2,882.9 592.0,881.8 595.9,880.7 599.7,879.6 603.5,878.6 607.4,877.6 611.2,876.7 615.1,875.7 619.0,874.8 622.8,874.0 626.7,873.1 630.5,872.3 634.4,871.5 638.2,870.7 642.0,870.0 645.9,869.3 649.8,868.6 653.6,867.9 657.5,867.2 661.3,866.6 665.2,866.0 669.0,865.4 672.8,864.8 676.7,864.2 680.5,863.7 684.4,863.2 688.2,862.6 692.1,862.1 696.0,861.7 699.8,861.2 703.6,860.8 707.5,860.3 711.4,859.9 715.2,859.5 719.0,859.1 722.9,858.7 726.8,858.3 730.6,858.0 734.5,857.6 738.3,857.3 742.1,857.0 746.0,856.6 749.9,856.3 753.7,856.0 757.5,855.7 761.4,855.5 765.2,855.2 769.1,854.9 773.0,854.7 776.8,854.4 780.6,854.2 784.5,853.9 788.3,853.7 792.2,853.5 796.1,853.3 799.9,853.1 803.8,852.9 807.6,852.7 811.5,852.5 815.3,852.3 819.2,852.2 823.0,852.0 826.9,851.8 830.7,851.7 834.5,851.5 838.4,851.4 842.2,851.2 846.1,851.1 850.0,850.9 853.8,850.8 857.7,850.7 861.5,850.6 865.4,850.4 869.2,850.3 873.1,850.2 876.9,850.1 880.8,850.0 884.6,849.9 888.4,849.8 892.3,849.7 896.2,849.6 900.0,849.5 903.9,849.4 907.7,849.3 911.6,849.3 915.4,849.2 919.3,849.1 923.1,849.0 927.0,849.0 930.8,848.9 934.6,848.8 938.5,848.8 942.4,848.7 946.2,848.6 950.0,848.6 953.9,848.5 957.8,848.5 961.6,848.4 965.5,848.4 969.3,848.3 973.1,848.3 977.0,848.2 980.8,848.2 984.7,848.1 988.6,848.1 992.4,848.0 996.2,848.0 1000.1,847.9 1003.9,847.9 1007.8,847.9 1011.6,847.8 1015.5,847.8 1019.4,847.8 1023.2,847.7 1027.0,847.7 1030.9,847.7 1034.8,847.6 1038.6,847.6 1042.5,847.6 1046.3,847.6 1050.2,847.5 1054.0,847.5 1057.8,847.5 1061.7,847.5 1065.6,847.4 1069.4,847.4 1073.2,847.4 1077.1,847.4 1081.0,847.4 1084.8,847.3 1088.7,847.3 1092.5,847.3 1096.3,847.3 1100.2,847.3 1104.0,847.2 1107.9,847.2 1111.8,847.2 1115.6,847.2 1119.5,847.2 1123.3,847.2 1127.2,847.2 1131.0,847.1" fill="none" stroke="#58a6ff" stroke-width="2"/>
<circle cx="482.9" cy="932.5" r="3.2" fill="#f07878"/>
<text x="365" y="842.7" class="lt" fill="#c9a43e" font-weight="bold" style="letter-spacing:-0.3px">T∞=4544.5774°C</text>
<text x="487.5" y="846.6" class="lt" fill="#e5534b">τ=12.35ms</text></svg>
</body></html>
